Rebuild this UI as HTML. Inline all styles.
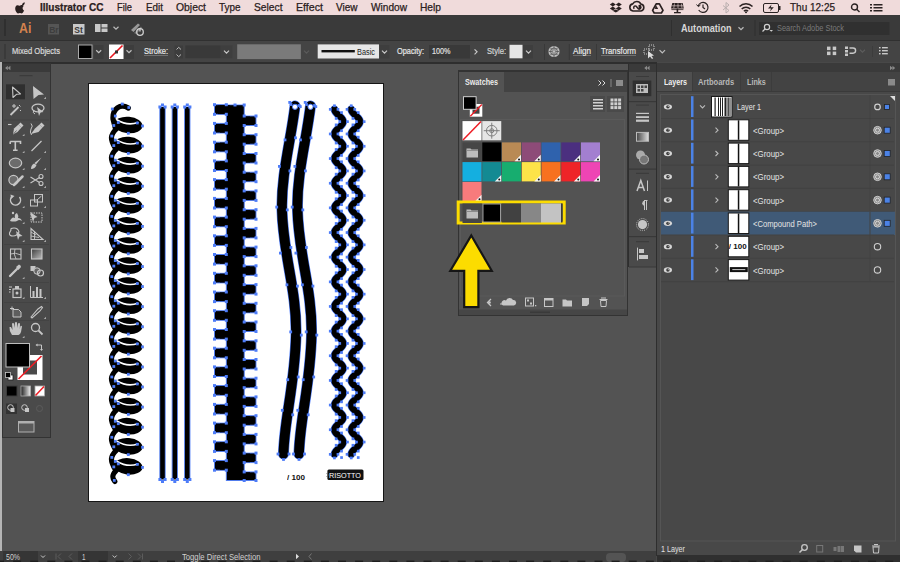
<!DOCTYPE html><html><head><meta charset="utf-8"><style>
*{margin:0;padding:0;box-sizing:border-box}
html,body{width:900px;height:562px;overflow:hidden;background:#535353;font-family:"Liberation Sans",sans-serif}
.a{position:absolute}
.t{position:absolute;white-space:nowrap;line-height:1;transform-origin:0 0}
svg{position:absolute;overflow:visible}
</style></head><body><div class="a" style="left:0px;top:0px;width:900px;height:15px;background:#f0dbdb;"></div><div class="t" style="left:39.5px;top:2.21px;font-size:10.5px;color:#2a2020;font-weight:bold;transform:scaleX(0.9547);-webkit-text-stroke:0.25px #2a2020">Illustrator CC</div><div class="t" style="left:117px;top:2.21px;font-size:10.5px;color:#2a2020;font-weight:normal;transform:scaleX(0.8864);-webkit-text-stroke:0.25px #2a2020">File</div><div class="t" style="left:146px;top:2.21px;font-size:10.5px;color:#2a2020;font-weight:normal;transform:scaleX(0.9396);-webkit-text-stroke:0.25px #2a2020">Edit</div><div class="t" style="left:176px;top:2.21px;font-size:10.5px;color:#2a2020;font-weight:normal;transform:scaleX(0.9882);-webkit-text-stroke:0.25px #2a2020">Object</div><div class="t" style="left:219px;top:2.21px;font-size:10.5px;color:#2a2020;font-weight:normal;transform:scaleX(0.9444);-webkit-text-stroke:0.25px #2a2020">Type</div><div class="t" style="left:253.5px;top:2.21px;font-size:10.5px;color:#2a2020;font-weight:normal;transform:scaleX(0.9764);-webkit-text-stroke:0.25px #2a2020">Select</div><div class="t" style="left:295.5px;top:2.21px;font-size:10.5px;color:#2a2020;font-weight:normal;transform:scaleX(1.0129);-webkit-text-stroke:0.25px #2a2020">Effect</div><div class="t" style="left:335.5px;top:2.21px;font-size:10.5px;color:#2a2020;font-weight:normal;transform:scaleX(0.9522);-webkit-text-stroke:0.25px #2a2020">View</div><div class="t" style="left:370.5px;top:2.21px;font-size:10.5px;color:#2a2020;font-weight:normal;transform:scaleX(0.9636);-webkit-text-stroke:0.25px #2a2020">Window</div><div class="t" style="left:419.5px;top:2.21px;font-size:10.5px;color:#2a2020;font-weight:normal;transform:scaleX(0.9718);-webkit-text-stroke:0.25px #2a2020">Help</div><div class="t" style="left:790px;top:2.21px;font-size:10.5px;color:#2a2020;font-weight:normal;transform:scaleX(0.9514);-webkit-text-stroke:0.25px #2a2020">Thu 12:25</div><svg style="left:14px;top:1px;" width="12" height="13" viewBox="0 0 12 13"><path d="M8.2 1.2c-.8.1-1.7.6-2.1 1.3-.4.6-.7 1.4-.6 2.1.9 0 1.7-.5 2.2-1.2.4-.6.7-1.4.5-2.2zM5.6 4.2c-1 0-1.9.6-2.5.6-.6 0-1.4-.6-2.3-.5C-.3 4.4-1.3 5.5-1.3 7.6c0 1.3.5 2.6 1.1 3.5.5.7 1 1.4 1.7 1.4.7 0 1-.4 1.8-.4s1.1.4 1.8.4c.8 0 1.2-.7 1.7-1.4.5-.8.8-1.5.8-1.6 0 0-1.5-.6-1.5-2.3 0-1.4 1.1-2.1 1.2-2.2-.7-1-1.7-1.1-2-1.1-.9-.1-1.7.5-2.1.5z" transform="translate(2.5 0)" fill="#2a2020"/></svg><svg style="left:0px;top:0px;" width="900" height="15" viewBox="0 0 900 15"><g transform="translate(609.8 2.6)" fill="#2a2020"><path d="M3 0 L6 2 L3 4 L0 2Z M9 0 L12 2 L9 4 L6 2Z M3 4 L6 6 L3 8 L0 6Z M9 4 L12 6 L9 8 L6 6Z M2.8 8.2 L6 6.8 L9.2 8.2 L6 10Z"/></g><g fill="none" stroke="#2a2020"><path d="M633 11 a3.6 3.6 0 0 1 -0.3 -7.1 a4.6 4.6 0 0 1 8.2 0.2 a3.5 3.5 0 0 1 0 6.9z" stroke-width="1.6"/><path d="M634.3 8.8 a1.6 1.6 0 1 1 2.6 -1.6 l1.5 1.6 a1.6 1.6 0 1 0 0.8 -3" stroke-width="1.5"/></g><path d="M638.5 5 a2.3 2.3 0 1 1 0.2 4.5Z" fill="#2a2020"/><g transform="translate(652.6 3)" fill="none" stroke="#2a2020" stroke-width="1.7" stroke-linejoin="round"><path d="M3.6 0.8 L6.8 0.8 L10.4 7.4 L8.8 10 L1.6 10 L0 7.4Z"/></g><path d="M655.6 4.5 L658.2 9 L655 9Z" fill="#2a2020"/><g transform="translate(671 3)" fill="#2a2020"><path d="M1.3 0 L11.7 0 L12.8 5.6 L0 5.6Z"/><rect x="5.6" y="5.6" width="1.6" height="4"/><rect x="3" y="9" width="6.8" height="1.3"/><path d="M0.4 6.6 H12.4" stroke="#2a2020" stroke-width="0.8"/></g><path d="M674.5 3.5 L673.8 8 M678 3.3 V8 M681.3 3.5 L682 8 M671.6 5.8 H683.2" stroke="#f0dbdb" stroke-width=".6"/><g transform="translate(703 7.5)" fill="none" stroke="#2a2222" stroke-width="1.2"><path d="M-4.8 -1.5 A5 5 0 1 1 -4.3 2.5"/><path d="M0 -3 V0 L2 1.5"/><path d="M-6.5 -3 L-4.6 -0.8 L-2.5 -2.6" stroke-width="1"/></g><g transform="translate(726 2.5)" fill="none" stroke="#b8aeae" stroke-width="1"><path d="M-3 3 L3 8 L0 10.5 V0 L3 2.5 L-3 7.5"/></g><g transform="translate(746 12.5)" fill="none" stroke="#2a2222" stroke-width="1.5"><path d="M-6.5 -6 A9 9 0 0 1 6.5 -6"/><path d="M-4.3 -3.5 A6 6 0 0 1 4.3 -3.5"/><path d="M-2.1 -1.2 A3 3 0 0 1 2.1 -1.2"/></g><circle cx="746" cy="12.3" r="1" fill="#2a2222"/><g transform="translate(763 3)"><rect x="0.5" y="0.5" width="15" height="9" rx="1.5" fill="none" stroke="#2a2222" stroke-width="1"/><rect x="16" y="3" width="1.5" height="4" fill="#2a2222"/><path d="M8.5 1.5 L5 5.5 L8 5.5 L7 8.5 L10.8 4.3 L7.8 4.3Z" fill="#2a2222"/></g><g transform="translate(851 3.5)" fill="none" stroke="#2a2222" stroke-width="1.4"><circle cx="3.5" cy="3.5" r="3"/><path d="M5.7 5.7 L8.5 8.5"/></g><g transform="translate(870 4)" fill="#2a2222"><rect x="0" y="0" width="2" height="1.5"/><rect x="0" y="3" width="2" height="1.5"/><rect x="0" y="6" width="2" height="1.5"/><rect x="3.5" y="0" width="9" height="1.5"/><rect x="3.5" y="3" width="9" height="1.5"/><rect x="3.5" y="6" width="9" height="1.5"/></g></svg><div class="a" style="left:0px;top:15px;width:900px;height:25px;background:#3a3a3a;"></div><div class="a" style="left:4px;top:19px;width:2px;height:17px;background:#2f2f2f;"></div><div class="t" style="left:18.8px;top:21.45px;font-size:14px;color:#d4824e;font-weight:bold;transform:scaleX(0.8786);">Ai</div><svg style="left:0px;top:0px;" width="900" height="40" viewBox="0 0 900 40"><rect x="48" y="24" width="11" height="10.5" fill="#555"/><text x="49.2" y="32.6" font-size="8.5" font-family="Liberation Sans" fill="#3d3d3d" font-weight="bold">Br</text><rect x="73" y="24" width="11.5" height="10.5" fill="#c9c9c9"/><text x="74.3" y="32.6" font-size="8.5" font-family="Liberation Sans" fill="#3a3a3a" font-weight="bold">St</text><g fill="#c8c8c8"><rect x="95" y="24" width="5.5" height="8"/><rect x="101.5" y="24" width="6" height="3.5"/><rect x="101.5" y="28.5" width="6" height="3.5"/></g><path d="M113.5 26.75 L116 29.25 L118.5 26.75" stroke="#bbb" stroke-width="1.2" fill="none"/><g fill="#9a9a9a"><path d="M131 30 L138 23.5 L140 25 L133.5 32Z"/><path d="M134 33 L141 26.5 L142 28 L136 34Z" fill="#777"/></g><circle cx="140" cy="32" r="3.3" fill="none" stroke="#cfcfcf" stroke-width="1.3"/><path d="M140 28 V31.5" stroke="#cfcfcf" stroke-width="1.3"/><rect x="671" y="20" width="1" height="16" fill="#2f2f2f"/><rect x="754.5" y="20" width="1" height="16" fill="#2f2f2f"/><path d="M738.5 27.25 L741 29.75 L743.5 27.25" stroke="#bbb" stroke-width="1.2" fill="none"/><rect x="759" y="22" width="130.5" height="13" fill="#303030"/><g fill="none" stroke="#cfcfcf" stroke-width="1.2"><circle cx="767" cy="27" r="2.6"/><path d="M765 29 L762.5 31.5"/></g><path d="M769.5 30 L773 30 L771.25 31.8Z" fill="#cfcfcf"/></svg><div class="t" style="left:681px;top:23.54px;font-size:10px;color:#d7d7d7;font-weight:bold;transform:scaleX(0.9091);">Automation</div><div class="t" style="left:777px;top:24.30px;font-size:8.5px;color:#7a7a7a;font-weight:normal;transform:scaleX(0.8698);">Search Adobe Stock</div><div class="a" style="left:0px;top:40px;width:900px;height:22px;background:#444444;"></div><div class="a" style="left:0px;top:40px;width:900px;height:1px;background:#303030;"></div><div class="a" style="left:4px;top:44px;width:2px;height:15px;background:#3a3a3a;"></div><div class="t" style="left:11.7px;top:47.07px;font-size:8.9px;color:#d2d2d2;font-weight:normal;transform:scaleX(0.8536);-webkit-text-stroke:0.2px #e0e0e0">Mixed Objects</div><svg style="left:0px;top:0px;" width="900" height="62" viewBox="0 0 900 62"><rect x="78" y="44.5" width="14.5" height="14.5" fill="#aaa"/><rect x="79" y="45.5" width="12.5" height="12.5" fill="#000"/><rect x="94" y="45" width="9.5" height="14" fill="#3d3d3d"/><path d="M96.2 50.25 L98.7 52.75 L101.2 50.25" stroke="#c0c0c0" stroke-width="1.2" fill="none"/><rect x="109" y="44.5" width="14.5" height="14.5" fill="#fff"/><path d="M110 58 L122.5 45.5" stroke="#e8141c" stroke-width="1.6"/><rect x="115" y="50.5" width="3" height="3" fill="#333"/><rect x="124" y="45" width="10" height="14" fill="#3d3d3d"/><path d="M126.5 50.25 L129 52.75 L131.5 50.25" stroke="#c0c0c0" stroke-width="1.2" fill="none"/><rect x="174.5" y="45.5" width="8.5" height="13" fill="#3d3d3d"/><path d="M176.5 49.5 L178.7 47.3 L181 49.5 M176.5 54.5 L178.7 56.7 L181 54.5" stroke="#bbb" stroke-width="1" fill="none"/><rect x="185.3" y="45.4" width="35.4" height="12.8" fill="#393939"/><rect x="221" y="45.4" width="11.5" height="12.8" fill="#3e3e3e"/><path d="M224.0 50.55 L226.5 53.05 L229.0 50.55" stroke="#c8c8c8" stroke-width="1.2" fill="none"/><rect x="237.2" y="44.3" width="63.7" height="14.8" fill="#7a7a7a"/><path d="M304.0 50.55 L306.5 53.05 L309.0 50.55" stroke="#5a5a5a" stroke-width="1.2" fill="none"/><rect x="317.7" y="44.4" width="61.3" height="14.1" fill="#e6e6e6"/><rect x="321.5" y="50" width="33.3" height="2.4" fill="#111"/><rect x="379.5" y="45" width="10" height="13.5" fill="#3e3e3e"/><path d="M382.0 50.55 L384.5 53.05 L387.0 50.55" stroke="#c8c8c8" stroke-width="1.2" fill="none"/><rect x="429" y="45" width="41" height="13.5" fill="#393939"/><path d="M474.55 49.3 L477.05 51.8 L474.55 54.3" stroke="#c8c8c8" stroke-width="1.2" fill="none"/><rect x="509.5" y="44.8" width="13" height="13.5" fill="#e6e6e6"/><rect x="523" y="45" width="10" height="13.5" fill="#3e3e3e"/><path d="M526.0 50.55 L528.5 53.05 L531.0 50.55" stroke="#c8c8c8" stroke-width="1.2" fill="none"/><rect x="544" y="44" width="1" height="16" fill="#393939"/><rect x="568.8" y="44" width="1" height="16" fill="#393939"/><rect x="596" y="44" width="1" height="16" fill="#393939"/><circle cx="554" cy="51.5" r="5.6" fill="#bdbdbd"/><g stroke="#555" stroke-width=".8" fill="none"><circle cx="554" cy="51.5" r="3.5"/><path d="M554 46 V57 M548.5 51.5 H559.5 M550 47.5 L558 55.5 M558 47.5 L550 55.5"/></g><circle cx="554" cy="51.5" r="1.2" fill="#bdbdbd"/><g stroke="#c8c8c8" stroke-width="1" fill="none"><rect x="644" y="49" width="5" height="5" stroke-dasharray="1 1"/><rect x="649" y="45" width="5" height="5" stroke-dasharray="1 1"/></g><path d="M648 51 L648 58.5 L650 56.5 L652 59 L653.2 58.3 L651.5 56 L654 55.5Z" fill="#ddd"/><path d="M659.55 50.125 L662.3 52.875 L665.05 50.125" stroke="#c0c0c0" stroke-width="1.2" fill="none"/><g fill="#c8c8c8"><rect x="827" y="46.6" width="3.5" height="3.5"/><rect x="832.7" y="46.6" width="3.5" height="3.5"/><rect x="827" y="51.6" width="3.5" height="3.5"/><rect x="832.7" y="51.6" width="3.5" height="3.5"/></g><g fill="#c8c8c8"><rect x="845" y="46.5" width="3" height="2.5"/><rect x="845" y="50" width="3" height="2.5"/><rect x="845" y="53.5" width="3" height="2.5"/></g><path d="M849.5 48 H853 A2.6 2.6 0 0 1 853 53.2 H849.5" stroke="#c8c8c8" stroke-width="1.4" fill="none"/><path d="M860.0 49.75 L862.5 52.25 L865.0 49.75" stroke="#5c5c5c" stroke-width="1.1" fill="none"/><rect x="872" y="46" width="1" height="11" fill="#3c3c3c"/><g fill="#c8c8c8"><rect x="879" y="47" width="1.6" height="1.4"/><rect x="879" y="50" width="1.6" height="1.4"/><rect x="879" y="53" width="1.6" height="1.4"/><rect x="882" y="47" width="5.8" height="1.4"/><rect x="882" y="50" width="5.8" height="1.4"/><rect x="882" y="53" width="5.8" height="1.4"/></g></svg><div class="t" style="left:144.3px;top:47.07px;font-size:8.9px;color:#ececec;font-weight:normal;transform:scaleX(0.8533);text-decoration:underline;text-decoration-color:#707070;-webkit-text-stroke:0.2px #e0e0e0">Stroke:</div><div class="t" style="left:357.3px;top:48.00px;font-size:8.5px;color:#222;font-weight:normal;transform:scaleX(0.8655);">Basic</div><div class="t" style="left:397px;top:47.07px;font-size:8.9px;color:#ececec;font-weight:normal;transform:scaleX(0.8292);-webkit-text-stroke:0.2px #e0e0e0">Opacity:</div><div class="t" style="left:431.5px;top:47.24px;font-size:8.7px;color:#e0e0e0;font-weight:normal;transform:scaleX(0.8320);-webkit-text-stroke:0.2px #e0e0e0">100%</div><div class="t" style="left:486.5px;top:47.07px;font-size:8.9px;color:#c4c4c4;font-weight:normal;transform:scaleX(0.8647);-webkit-text-stroke:0.2px #e0e0e0">Style:</div><div class="t" style="left:572.5px;top:47.07px;font-size:8.9px;color:#ececec;font-weight:normal;transform:scaleX(0.9114);text-decoration:underline;text-decoration-color:#707070;-webkit-text-stroke:0.2px #e0e0e0">Align</div><div class="t" style="left:601px;top:47.07px;font-size:8.9px;color:#ececec;font-weight:normal;transform:scaleX(0.8726);text-decoration:underline;text-decoration-color:#707070;-webkit-text-stroke:0.2px #e0e0e0">Transform</div><div class="a" style="left:0px;top:62px;width:900px;height:2px;background:#2e2e2e;"></div><div class="a" style="left:0px;top:62px;width:1.5px;height:500px;background:#b5b5b5;"></div><div class="a" style="left:1.5px;top:63px;width:49.5px;height:375px;background:#4a4a4a;border:1px solid #333"></div><div class="a" style="left:2.5px;top:64px;width:47.5px;height:8px;background:#3a3a3a;"></div><svg style="left:0px;top:0px;" width="60" height="450" viewBox="0 0 60 450"><path d="M7.8 65.8 L5.1 68 L7.8 70.2Z M10.4 65.8 L7.7 68 L10.4 70.2Z" fill="#8a8a8a"/><rect x="19.5" y="75.2" width="13" height="1" fill="#383838"/><rect x="6" y="84.3" width="19" height="15" fill="#2f2f2f"/><path d="M12.5 87 L20.5 94 L16.5 94.3 L13 97.5Z" fill="none" stroke="#c6c6c6" stroke-width="1.1" stroke-linejoin="round"/><path d="M33 86 L44 94.5 L38.5 95 L33.5 99Z" fill="#c6c6c6"/><path d="M46 99 L46 96.8 L43.8 99Z" fill="#aaa"/><path d="M10.5 115 L18.5 107" stroke="#c6c6c6" stroke-width="1.8"/><path d="M14 104 L14 108 M12 106 L16 106 M19 105 L20.5 106.5 M20 110 L21 111" stroke="#c6c6c6" stroke-width="1"/><ellipse cx="38" cy="108" rx="6" ry="3.8" fill="none" stroke="#c6c6c6" stroke-width="1.3"/><path d="M34 110 Q32 113 35 114" fill="none" stroke="#c6c6c6" stroke-width="1"/><path d="M37 107 L43.5 112 L40.5 112.5 L39 116Z" fill="#c6c6c6"/><rect x="4" y="119.5" width="45" height="1" fill="#434343"/><path d="M8 124.5 L11.5 124.5" stroke="#c6c6c6" stroke-width="1.1"/><path d="M13 134.5 L14 128.5 L18.5 124.5 L21.5 127.5 L17.5 132Z" fill="#c6c6c6"/><path d="M18.5 124.5 L20.5 122.5 L23.5 125.5 L21.5 127.5" fill="#c6c6c6"/><path d="M13.5 134 L16.5 130.5" stroke="#555" stroke-width=".8"/><path d="M24.5 136 L24.5 133.8 L22.3 136Z" fill="#aaa"/><path d="M31 134 L35 128.5 L39.5 124.5 L42.5 127.5 L38.5 132Z" fill="#c6c6c6"/><path d="M39.5 124.5 L41.5 122.5 L44.5 125.5 L42.5 127.5" fill="#c6c6c6"/><path d="M31 123.5 Q33.5 126 31 129 Q29.5 132 31.5 135" fill="none" stroke="#c6c6c6" stroke-width="1"/><path d="M10.2 141.5 H20.5 V144 M10.2 141.5 V144 M15.3 141.5 V150.3 M13 150.3 H17.6" fill="none" stroke="#c6c6c6" stroke-width="1.6"/><path d="M24.5 153 L24.5 150.8 L22.3 153Z" fill="#aaa"/><path d="M31.5 151 L41.5 141" stroke="#c6c6c6" stroke-width="1.3"/><path d="M46 153 L46 150.8 L43.8 153Z" fill="#aaa"/><ellipse cx="15.5" cy="163" rx="6.2" ry="4.8" fill="#6c6c6c" stroke="#c6c6c6" stroke-width="1.2"/><path d="M24.5 170 L24.5 167.8 L22.3 170Z" fill="#aaa"/><path d="M41.5 157.5 L36 164.5 L34.5 163 Z" fill="#c6c6c6"/><path d="M34 163.5 Q31 165 31 169 Q35 169 36.5 165Z" fill="#c6c6c6"/><path d="M46 170 L46 167.8 L43.8 170Z" fill="#aaa"/><circle cx="13.5" cy="180" r="4.6" fill="#6c6c6c" stroke="#c6c6c6" stroke-width="1.2"/><path d="M14 185 L22.5 176.5" stroke="#c6c6c6" stroke-width="2.5" stroke-linecap="round"/><path d="M24.5 188 L24.5 185.8 L22.3 188Z" fill="#aaa"/><circle cx="41" cy="176.5" r="2" fill="none" stroke="#c6c6c6" stroke-width="1.1"/><circle cx="41" cy="183.5" r="2" fill="none" stroke="#c6c6c6" stroke-width="1.1"/><path d="M30.5 177 L39.5 182.5 M30.5 183 L39.5 177.5" stroke="#c6c6c6" stroke-width="1.2"/><path d="M46 188 L46 185.8 L43.8 188Z" fill="#aaa"/><rect x="4" y="190" width="45" height="1" fill="#434343"/><path d="M12 196.5 A5 5 0 1 0 19.5 197" fill="none" stroke="#c6c6c6" stroke-width="1.5"/><path d="M10.5 194.5 L14.5 196 L11 199Z" fill="#c6c6c6"/><path d="M24.5 208 L24.5 205.8 L22.3 208Z" fill="#aaa"/><rect x="30.5" y="200" width="7" height="6" fill="none" stroke="#c6c6c6" stroke-width="1"/><rect x="34.5" y="194.5" width="8" height="7.5" fill="none" stroke="#c6c6c6" stroke-width="1"/><path d="M37 200 L41.5 196" stroke="#c6c6c6" stroke-width="1"/><path d="M46 208 L46 205.8 L43.8 208Z" fill="#aaa"/><path d="M10 221 Q12 216 15 218 Q14 214 17 213 Q19 216 18 218 Q21 218 22 221 Q19 219 17 221 Q14 222 10 221Z" fill="#c6c6c6"/><circle cx="13" cy="213" r="1.2" fill="#c6c6c6"/><path d="M24.5 224 L24.5 221.8 L22.3 224Z" fill="#aaa"/><rect x="31" y="213" width="11" height="9" fill="none" stroke="#c6c6c6" stroke-width="1" stroke-dasharray="1.5 1"/><path d="M30 212 L37.5 217 L34.5 218 L33 222Z" fill="#c6c6c6"/><path d="M11 230 Q10 228 14 228 Q18 228 19 232 Q17 236 13 236 Q9 236 9.5 233Z" fill="none" stroke="#c6c6c6" stroke-width="1.1"/><path d="M16 231 L22.5 236 L19.5 236.5 L18 240Z" fill="#c6c6c6"/><path d="M24.5 242 L24.5 239.8 L22.3 242Z" fill="#aaa"/><path d="M31 228.5 L31 239.5 L43 239.5 Z" fill="none" stroke="#c6c6c6" stroke-width="1.1"/><path d="M31 232 L36 235 M31 236 L39 237.5 M34.5 231 V239.5" stroke="#c6c6c6" stroke-width=".9"/><path d="M46 242 L46 239.8 L43.8 242Z" fill="#aaa"/><rect x="4" y="244" width="45" height="1" fill="#434343"/><rect x="10.5" y="249" width="10.5" height="10" fill="none" stroke="#c6c6c6" stroke-width="1.1"/><path d="M10.5 254 Q15 252 21 255 M15 249 Q13 254 16 259" fill="none" stroke="#c6c6c6" stroke-width=".9"/><defs><linearGradient id="tg" x1="0" y1="0" x2="1" y2="1"><stop offset="0" stop-color="#3c3c3c"/><stop offset="1" stop-color="#bdbdbd"/></linearGradient><linearGradient id="tg2" x1="0" y1="0" x2="1" y2="0"><stop offset="0" stop-color="#222"/><stop offset="1" stop-color="#eee"/></linearGradient></defs><rect x="31.5" y="249" width="10.5" height="10" fill="url(#tg)" stroke="#c6c6c6" stroke-width="1.1"/><path d="M10 276 L17 269" stroke="#c6c6c6" stroke-width="2.3" stroke-linecap="round"/><path d="M16 267 L19 264.5 Q21 265 21 267 L18.5 270Z" fill="#c6c6c6"/><path d="M24.5 279 L24.5 276.8 L22.3 279Z" fill="#aaa"/><rect x="30.5" y="266" width="5" height="5" fill="#c6c6c6"/><circle cx="37" cy="271" r="3.2" fill="#666" stroke="#c6c6c6" stroke-width="1"/><circle cx="40.5" cy="273" r="3" fill="none" stroke="#c6c6c6" stroke-width="1.2"/><rect x="4" y="282" width="45" height="1" fill="#434343"/><path d="M9 287 H12 M9 289.5 H11 M9 292 H10.5" stroke="#c6c6c6" stroke-width="1"/><rect x="13" y="289" width="8" height="8.5" fill="none" stroke="#c6c6c6" stroke-width="1.2"/><rect x="15" y="286" width="4" height="3" fill="#c6c6c6"/><circle cx="17" cy="293" r="1.5" fill="#c6c6c6"/><path d="M24.5 299 L24.5 296.8 L22.3 299Z" fill="#aaa"/><path d="M30.5 286 V297.5 H43" fill="none" stroke="#c6c6c6" stroke-width="1"/><rect x="32.5" y="291" width="2" height="6" fill="#c6c6c6"/><rect x="36" y="287" width="2" height="10" fill="#c6c6c6"/><rect x="39.5" y="289" width="2" height="8" fill="#c6c6c6"/><path d="M46 299 L46 296.8 L43.8 299Z" fill="#aaa"/><rect x="4" y="302" width="45" height="1" fill="#434343"/><path d="M10 308.5 H14 M12 306.5 V310" stroke="#c6c6c6" stroke-width="1"/><path d="M13 309.5 H18.5 L21 312 V317 H13Z" fill="#5e5e5e" stroke="#c6c6c6" stroke-width="1"/><path d="M31 317 L38 309 L41.5 306.5 L42.5 307.5 L40 311 L32 318Z" fill="none" stroke="#c6c6c6" stroke-width="1.1"/><path d="M46 319 L46 316.8 L43.8 319Z" fill="#aaa"/><rect x="4" y="320" width="45" height="1" fill="#434343"/><path d="M12 335 Q9 331 9.5 327 L11 327 L12.5 330 L12 323.5 Q13 322.5 14 323.5 L14.5 328 L15 322.5 Q16 321.5 17 322.5 L17 328 L18 323.5 Q19 322.5 20 323.5 L19.8 329 L20.5 326 Q21.5 325.5 22 326.5 L21 332 Q20 335 18.5 335Z" fill="#c6c6c6"/><path d="M24.5 338 L24.5 335.8 L22.3 338Z" fill="#aaa"/><circle cx="35.5" cy="327.5" r="4" fill="none" stroke="#c6c6c6" stroke-width="1.3"/><path d="M38.5 330.5 L42.5 334.5" stroke="#c6c6c6" stroke-width="1.8"/><rect x="17.5" y="355" width="25" height="25" fill="#fff"/><rect x="23" y="360.5" width="14" height="14" fill="#4a4a4a"/><path d="M18.5 379 L41.5 356" stroke="#ee1c24" stroke-width="1.6"/><rect x="5.5" y="343" width="24.5" height="24.5" fill="#bdbdbd"/><rect x="6.5" y="344" width="22.5" height="22.5" fill="#000"/><path d="M37 345 H41.5 V349.5" fill="none" stroke="#c6c6c6" stroke-width="1"/><path d="M35.5 345 L37.5 343.5 V346.5Z M41.5 351 L40 349 H43Z" fill="#c6c6c6"/><rect x="8" y="375" width="5" height="5" fill="#fff" stroke="#222" stroke-width=".8"/><rect x="5.5" y="372.5" width="5" height="5" fill="#000" stroke="#c6c6c6" stroke-width=".8"/><rect x="6.5" y="386" width="10.5" height="10" fill="#000" stroke="#3a3a3a" stroke-width="1"/><rect x="21" y="386" width="9.5" height="10" fill="url(#tg2)" stroke="#aaa" stroke-width=".8"/><rect x="35" y="386" width="9.5" height="10" fill="#fff" stroke="#aaa" stroke-width=".8"/><path d="M35.5 395.5 L44 386.5" stroke="#ee1c24" stroke-width="1.5"/><rect x="6" y="403.5" width="11" height="10.5" fill="#333"/><circle cx="10.5" cy="407.5" r="2.8" fill="none" stroke="#c6c6c6" stroke-width="1"/><rect x="10.5" y="408" width="4" height="4" fill="#c6c6c6"/><circle cx="24.5" cy="407.5" r="2.8" fill="none" stroke="#c6c6c6" stroke-width="1"/><rect x="25" y="408" width="4" height="4" fill="#c6c6c6"/><circle cx="39.5" cy="408.5" r="3" fill="none" stroke="#5c5c5c" stroke-width="1"/><rect x="18.5" y="421.5" width="15.5" height="10.5" fill="#5a5a5a" stroke="#b0b0b0" stroke-width="1"/><rect x="18.5" y="421.5" width="15.5" height="2" fill="#b0b0b0"/></svg><div class="a" style="left:88px;top:82.5px;width:296px;height:419px;background:#fff;border:1.2px solid #151515"></div><svg width="900" height="562" style="position:absolute;left:0;top:0"><ellipse cx="128.3" cy="125.0" rx="14.2" ry="8.3" fill="#000" transform="rotate(5 128.3 125.0)"/><path d="M116.8 119.8 Q127.3 126.2 137.8 122.6" stroke="#fff" stroke-width="1.6" fill="none" stroke-linecap="round"/><ellipse cx="128.3" cy="145.1" rx="14.2" ry="8.3" fill="#000" transform="rotate(5 128.3 145.1)"/><path d="M116.8 139.9 Q127.3 146.3 137.8 142.7" stroke="#fff" stroke-width="1.6" fill="none" stroke-linecap="round"/><ellipse cx="128.3" cy="165.2" rx="14.2" ry="8.3" fill="#000" transform="rotate(5 128.3 165.2)"/><path d="M116.8 160.0 Q127.3 166.4 137.8 162.8" stroke="#fff" stroke-width="1.6" fill="none" stroke-linecap="round"/><ellipse cx="128.3" cy="185.2" rx="14.2" ry="8.3" fill="#000" transform="rotate(5 128.3 185.2)"/><path d="M116.8 180.0 Q127.3 186.4 137.8 182.8" stroke="#fff" stroke-width="1.6" fill="none" stroke-linecap="round"/><ellipse cx="128.3" cy="205.3" rx="14.2" ry="8.3" fill="#000" transform="rotate(5 128.3 205.3)"/><path d="M116.8 200.1 Q127.3 206.5 137.8 202.9" stroke="#fff" stroke-width="1.6" fill="none" stroke-linecap="round"/><ellipse cx="128.3" cy="225.4" rx="14.2" ry="8.3" fill="#000" transform="rotate(5 128.3 225.4)"/><path d="M116.8 220.2 Q127.3 226.6 137.8 223.0" stroke="#fff" stroke-width="1.6" fill="none" stroke-linecap="round"/><ellipse cx="128.3" cy="245.5" rx="14.2" ry="8.3" fill="#000" transform="rotate(5 128.3 245.5)"/><path d="M116.8 240.3 Q127.3 246.7 137.8 243.1" stroke="#fff" stroke-width="1.6" fill="none" stroke-linecap="round"/><ellipse cx="128.3" cy="265.6" rx="14.2" ry="8.3" fill="#000" transform="rotate(5 128.3 265.6)"/><path d="M116.8 260.4 Q127.3 266.8 137.8 263.2" stroke="#fff" stroke-width="1.6" fill="none" stroke-linecap="round"/><ellipse cx="128.3" cy="285.6" rx="14.2" ry="8.3" fill="#000" transform="rotate(5 128.3 285.6)"/><path d="M116.8 280.4 Q127.3 286.8 137.8 283.2" stroke="#fff" stroke-width="1.6" fill="none" stroke-linecap="round"/><ellipse cx="128.3" cy="305.7" rx="14.2" ry="8.3" fill="#000" transform="rotate(5 128.3 305.7)"/><path d="M116.8 300.5 Q127.3 306.9 137.8 303.3" stroke="#fff" stroke-width="1.6" fill="none" stroke-linecap="round"/><ellipse cx="128.3" cy="325.8" rx="14.2" ry="8.3" fill="#000" transform="rotate(5 128.3 325.8)"/><path d="M116.8 320.6 Q127.3 327.0 137.8 323.4" stroke="#fff" stroke-width="1.6" fill="none" stroke-linecap="round"/><ellipse cx="128.3" cy="345.9" rx="14.2" ry="8.3" fill="#000" transform="rotate(5 128.3 345.9)"/><path d="M116.8 340.7 Q127.3 347.1 137.8 343.5" stroke="#fff" stroke-width="1.6" fill="none" stroke-linecap="round"/><ellipse cx="128.3" cy="366.0" rx="14.2" ry="8.3" fill="#000" transform="rotate(5 128.3 366.0)"/><path d="M116.8 360.8 Q127.3 367.2 137.8 363.6" stroke="#fff" stroke-width="1.6" fill="none" stroke-linecap="round"/><ellipse cx="128.3" cy="386.0" rx="14.2" ry="8.3" fill="#000" transform="rotate(5 128.3 386.0)"/><path d="M116.8 380.8 Q127.3 387.2 137.8 383.6" stroke="#fff" stroke-width="1.6" fill="none" stroke-linecap="round"/><ellipse cx="128.3" cy="406.1" rx="14.2" ry="8.3" fill="#000" transform="rotate(5 128.3 406.1)"/><path d="M116.8 400.9 Q127.3 407.3 137.8 403.7" stroke="#fff" stroke-width="1.6" fill="none" stroke-linecap="round"/><ellipse cx="128.3" cy="426.2" rx="14.2" ry="8.3" fill="#000" transform="rotate(5 128.3 426.2)"/><path d="M116.8 421.0 Q127.3 427.4 137.8 423.8" stroke="#fff" stroke-width="1.6" fill="none" stroke-linecap="round"/><ellipse cx="128.3" cy="446.3" rx="14.2" ry="8.3" fill="#000" transform="rotate(5 128.3 446.3)"/><path d="M116.8 441.1 Q127.3 447.5 137.8 443.9" stroke="#fff" stroke-width="1.6" fill="none" stroke-linecap="round"/><ellipse cx="128.3" cy="466.4" rx="14.2" ry="8.3" fill="#000" transform="rotate(5 128.3 466.4)"/><path d="M116.8 461.2 Q127.3 467.6 137.8 464.0" stroke="#fff" stroke-width="1.6" fill="none" stroke-linecap="round"/><path d="M128.3 108.0 C120.30000000000001 103.0 112.30000000000001 109.0 113.00000000000001 119.0 L115.30000000000001 128.0 M116.3 129.0 C110.3 135.0 109.8 139.1 115.30000000000001 148.1 M116.3 149.1 C110.3 155.1 109.8 159.2 115.30000000000001 168.2 M116.3 169.2 C110.3 175.2 109.8 179.2 115.30000000000001 188.2 M116.3 189.2 C110.3 195.2 109.8 199.3 115.30000000000001 208.3 M116.3 209.3 C110.3 215.3 109.8 219.4 115.30000000000001 228.4 M116.3 229.4 C110.3 235.4 109.8 239.5 115.30000000000001 248.5 M116.3 249.5 C110.3 255.5 109.8 259.6 115.30000000000001 268.6 M116.3 269.6 C110.3 275.6 109.8 279.6 115.30000000000001 288.6 M116.3 289.6 C110.3 295.6 109.8 299.7 115.30000000000001 308.7 M116.3 309.7 C110.3 315.7 109.8 319.8 115.30000000000001 328.8 M116.3 329.8 C110.3 335.8 109.8 339.9 115.30000000000001 348.9 M116.3 349.9 C110.3 355.9 109.8 360.0 115.30000000000001 369.0 M116.3 370.0 C110.3 376.0 109.8 380.0 115.30000000000001 389.0 M116.3 390.0 C110.3 396.0 109.8 400.1 115.30000000000001 409.1 M116.3 410.1 C110.3 416.1 109.8 420.2 115.30000000000001 429.2 M116.3 430.2 C110.3 436.2 109.8 440.3 115.30000000000001 449.3 M116.3 450.3 C110.3 456.3 109.8 460.4 115.30000000000001 469.4 M116.3 470.4 C111.3 475.4 112.3 478.4 114.80000000000001 481.4" stroke="#000" stroke-width="5.2" fill="none" stroke-linecap="round"/><g fill="#4d7cf8"><rect x="141.1" y="124.6" width="2.8" height="2.8"/><rect x="126.9" y="131.9" width="2.8" height="2.8"/><rect x="135.9" y="121.6" width="2.8" height="2.8"/><rect x="116.9" y="121.1" width="2.8" height="2.8"/><rect x="112.4" y="124.1" width="2.8" height="2.8"/><rect x="120.9" y="102.6" width="2.8" height="2.8"/><rect x="127.4" y="106.1" width="2.8" height="2.8"/><rect x="110.9" y="107.6" width="2.8" height="2.8"/><rect x="113.9" y="114.6" width="2.8" height="2.8"/><rect x="141.1" y="144.7" width="2.8" height="2.8"/><rect x="126.9" y="152.0" width="2.8" height="2.8"/><rect x="135.9" y="141.7" width="2.8" height="2.8"/><rect x="116.9" y="141.2" width="2.8" height="2.8"/><rect x="112.4" y="144.2" width="2.8" height="2.8"/><rect x="110.4" y="134.7" width="2.8" height="2.8"/><rect x="113.9" y="138.7" width="2.8" height="2.8"/><rect x="141.1" y="164.8" width="2.8" height="2.8"/><rect x="126.9" y="172.1" width="2.8" height="2.8"/><rect x="135.9" y="161.8" width="2.8" height="2.8"/><rect x="116.9" y="161.3" width="2.8" height="2.8"/><rect x="112.4" y="164.3" width="2.8" height="2.8"/><rect x="110.4" y="154.8" width="2.8" height="2.8"/><rect x="113.9" y="158.8" width="2.8" height="2.8"/><rect x="141.1" y="184.8" width="2.8" height="2.8"/><rect x="126.9" y="192.1" width="2.8" height="2.8"/><rect x="135.9" y="181.8" width="2.8" height="2.8"/><rect x="116.9" y="181.3" width="2.8" height="2.8"/><rect x="112.4" y="184.3" width="2.8" height="2.8"/><rect x="110.4" y="174.8" width="2.8" height="2.8"/><rect x="113.9" y="178.8" width="2.8" height="2.8"/><rect x="141.1" y="204.9" width="2.8" height="2.8"/><rect x="126.9" y="212.2" width="2.8" height="2.8"/><rect x="135.9" y="201.9" width="2.8" height="2.8"/><rect x="116.9" y="201.4" width="2.8" height="2.8"/><rect x="112.4" y="204.4" width="2.8" height="2.8"/><rect x="110.4" y="194.9" width="2.8" height="2.8"/><rect x="113.9" y="198.9" width="2.8" height="2.8"/><rect x="141.1" y="225.0" width="2.8" height="2.8"/><rect x="126.9" y="232.3" width="2.8" height="2.8"/><rect x="135.9" y="222.0" width="2.8" height="2.8"/><rect x="116.9" y="221.5" width="2.8" height="2.8"/><rect x="112.4" y="224.5" width="2.8" height="2.8"/><rect x="110.4" y="215.0" width="2.8" height="2.8"/><rect x="113.9" y="219.0" width="2.8" height="2.8"/><rect x="141.1" y="245.1" width="2.8" height="2.8"/><rect x="126.9" y="252.4" width="2.8" height="2.8"/><rect x="135.9" y="242.1" width="2.8" height="2.8"/><rect x="116.9" y="241.6" width="2.8" height="2.8"/><rect x="112.4" y="244.6" width="2.8" height="2.8"/><rect x="110.4" y="235.1" width="2.8" height="2.8"/><rect x="113.9" y="239.1" width="2.8" height="2.8"/><rect x="141.1" y="265.2" width="2.8" height="2.8"/><rect x="126.9" y="272.5" width="2.8" height="2.8"/><rect x="135.9" y="262.2" width="2.8" height="2.8"/><rect x="116.9" y="261.7" width="2.8" height="2.8"/><rect x="112.4" y="264.7" width="2.8" height="2.8"/><rect x="110.4" y="255.2" width="2.8" height="2.8"/><rect x="113.9" y="259.2" width="2.8" height="2.8"/><rect x="141.1" y="285.2" width="2.8" height="2.8"/><rect x="126.9" y="292.5" width="2.8" height="2.8"/><rect x="135.9" y="282.2" width="2.8" height="2.8"/><rect x="116.9" y="281.7" width="2.8" height="2.8"/><rect x="112.4" y="284.7" width="2.8" height="2.8"/><rect x="110.4" y="275.2" width="2.8" height="2.8"/><rect x="113.9" y="279.2" width="2.8" height="2.8"/><rect x="141.1" y="305.3" width="2.8" height="2.8"/><rect x="126.9" y="312.6" width="2.8" height="2.8"/><rect x="135.9" y="302.3" width="2.8" height="2.8"/><rect x="116.9" y="301.8" width="2.8" height="2.8"/><rect x="112.4" y="304.8" width="2.8" height="2.8"/><rect x="110.4" y="295.3" width="2.8" height="2.8"/><rect x="113.9" y="299.3" width="2.8" height="2.8"/><rect x="141.1" y="325.4" width="2.8" height="2.8"/><rect x="126.9" y="332.7" width="2.8" height="2.8"/><rect x="135.9" y="322.4" width="2.8" height="2.8"/><rect x="116.9" y="321.9" width="2.8" height="2.8"/><rect x="112.4" y="324.9" width="2.8" height="2.8"/><rect x="110.4" y="315.4" width="2.8" height="2.8"/><rect x="113.9" y="319.4" width="2.8" height="2.8"/><rect x="141.1" y="345.5" width="2.8" height="2.8"/><rect x="126.9" y="352.8" width="2.8" height="2.8"/><rect x="135.9" y="342.5" width="2.8" height="2.8"/><rect x="116.9" y="342.0" width="2.8" height="2.8"/><rect x="112.4" y="345.0" width="2.8" height="2.8"/><rect x="110.4" y="335.5" width="2.8" height="2.8"/><rect x="113.9" y="339.5" width="2.8" height="2.8"/><rect x="141.1" y="365.6" width="2.8" height="2.8"/><rect x="126.9" y="372.9" width="2.8" height="2.8"/><rect x="135.9" y="362.6" width="2.8" height="2.8"/><rect x="116.9" y="362.1" width="2.8" height="2.8"/><rect x="112.4" y="365.1" width="2.8" height="2.8"/><rect x="110.4" y="355.6" width="2.8" height="2.8"/><rect x="113.9" y="359.6" width="2.8" height="2.8"/><rect x="141.1" y="385.6" width="2.8" height="2.8"/><rect x="126.9" y="392.9" width="2.8" height="2.8"/><rect x="135.9" y="382.6" width="2.8" height="2.8"/><rect x="116.9" y="382.1" width="2.8" height="2.8"/><rect x="112.4" y="385.1" width="2.8" height="2.8"/><rect x="110.4" y="375.6" width="2.8" height="2.8"/><rect x="113.9" y="379.6" width="2.8" height="2.8"/><rect x="141.1" y="405.7" width="2.8" height="2.8"/><rect x="126.9" y="413.0" width="2.8" height="2.8"/><rect x="135.9" y="402.7" width="2.8" height="2.8"/><rect x="116.9" y="402.2" width="2.8" height="2.8"/><rect x="112.4" y="405.2" width="2.8" height="2.8"/><rect x="110.4" y="395.7" width="2.8" height="2.8"/><rect x="113.9" y="399.7" width="2.8" height="2.8"/><rect x="141.1" y="425.8" width="2.8" height="2.8"/><rect x="126.9" y="433.1" width="2.8" height="2.8"/><rect x="135.9" y="422.8" width="2.8" height="2.8"/><rect x="116.9" y="422.3" width="2.8" height="2.8"/><rect x="112.4" y="425.3" width="2.8" height="2.8"/><rect x="110.4" y="415.8" width="2.8" height="2.8"/><rect x="113.9" y="419.8" width="2.8" height="2.8"/><rect x="141.1" y="445.9" width="2.8" height="2.8"/><rect x="126.9" y="453.2" width="2.8" height="2.8"/><rect x="135.9" y="442.9" width="2.8" height="2.8"/><rect x="116.9" y="442.4" width="2.8" height="2.8"/><rect x="112.4" y="445.4" width="2.8" height="2.8"/><rect x="110.4" y="435.9" width="2.8" height="2.8"/><rect x="113.9" y="439.9" width="2.8" height="2.8"/><rect x="141.1" y="466.0" width="2.8" height="2.8"/><rect x="126.9" y="473.3" width="2.8" height="2.8"/><rect x="135.9" y="463.0" width="2.8" height="2.8"/><rect x="116.9" y="462.5" width="2.8" height="2.8"/><rect x="112.4" y="465.5" width="2.8" height="2.8"/><rect x="110.4" y="456.0" width="2.8" height="2.8"/><rect x="113.9" y="460.0" width="2.8" height="2.8"/><rect x="112.9" y="479.0" width="2.8" height="2.8"/></g><rect x="159.9" y="107" width="5.2" height="372.5" fill="#000"/><rect x="159.4" y="107" width="0.8" height="372.5" fill="#4d7cf8"/><rect x="164.8" y="107" width="0.8" height="372.5" fill="#4d7cf8"/><rect x="172.2" y="107" width="5.2" height="372.5" fill="#000"/><rect x="171.7" y="107" width="0.8" height="372.5" fill="#4d7cf8"/><rect x="177.1" y="107" width="0.8" height="372.5" fill="#4d7cf8"/><rect x="184.7" y="107" width="5.2" height="372.5" fill="#000"/><rect x="184.2" y="107" width="0.8" height="372.5" fill="#4d7cf8"/><rect x="189.6" y="107" width="0.8" height="372.5" fill="#4d7cf8"/><g fill="#4d7cf8"><rect x="158.4" y="105.5" width="3" height="3"/><rect x="163.6" y="105.5" width="3" height="3"/><rect x="161.0" y="103.5" width="3" height="3"/><rect x="158.4" y="478.0" width="3" height="3"/><rect x="163.6" y="478.0" width="3" height="3"/><rect x="161.0" y="480.0" width="3" height="3"/><rect x="170.7" y="105.5" width="3" height="3"/><rect x="175.9" y="105.5" width="3" height="3"/><rect x="173.3" y="103.5" width="3" height="3"/><rect x="170.7" y="478.0" width="3" height="3"/><rect x="175.9" y="478.0" width="3" height="3"/><rect x="173.3" y="480.0" width="3" height="3"/><rect x="183.2" y="105.5" width="3" height="3"/><rect x="188.4" y="105.5" width="3" height="3"/><rect x="185.8" y="103.5" width="3" height="3"/><rect x="183.2" y="478.0" width="3" height="3"/><rect x="188.4" y="478.0" width="3" height="3"/><rect x="185.8" y="480.0" width="3" height="3"/></g><g fill="#000" stroke="#4d7cf8" stroke-width="0.9"><rect x="214.5" y="104.7" width="13" height="9.6" rx="1.8"/><rect x="214.5" y="123.4" width="13" height="9.6" rx="1.8"/><rect x="214.5" y="142.2" width="13" height="9.6" rx="1.8"/><rect x="214.5" y="160.9" width="13" height="9.6" rx="1.8"/><rect x="214.5" y="179.6" width="13" height="9.6" rx="1.8"/><rect x="214.5" y="198.4" width="13" height="9.6" rx="1.8"/><rect x="214.5" y="217.1" width="13" height="9.6" rx="1.8"/><rect x="214.5" y="235.8" width="13" height="9.6" rx="1.8"/><rect x="214.5" y="254.5" width="13" height="9.6" rx="1.8"/><rect x="214.5" y="273.3" width="13" height="9.6" rx="1.8"/><rect x="214.5" y="292.0" width="13" height="9.6" rx="1.8"/><rect x="214.5" y="310.7" width="13" height="9.6" rx="1.8"/><rect x="214.5" y="329.5" width="13" height="9.6" rx="1.8"/><rect x="214.5" y="348.2" width="13" height="9.6" rx="1.8"/><rect x="214.5" y="366.9" width="13" height="9.6" rx="1.8"/><rect x="214.5" y="385.6" width="13" height="9.6" rx="1.8"/><rect x="214.5" y="404.4" width="13" height="9.6" rx="1.8"/><rect x="214.5" y="423.1" width="13" height="9.6" rx="1.8"/><rect x="214.5" y="441.8" width="13" height="9.6" rx="1.8"/><rect x="214.5" y="460.6" width="13" height="9.6" rx="1.8"/><rect x="243" y="116.0" width="13" height="9.5" rx="1.8"/><rect x="243" y="134.7" width="13" height="9.5" rx="1.8"/><rect x="243" y="153.5" width="13" height="9.5" rx="1.8"/><rect x="243" y="172.2" width="13" height="9.5" rx="1.8"/><rect x="243" y="190.9" width="13" height="9.5" rx="1.8"/><rect x="243" y="209.7" width="13" height="9.5" rx="1.8"/><rect x="243" y="228.4" width="13" height="9.5" rx="1.8"/><rect x="243" y="247.1" width="13" height="9.5" rx="1.8"/><rect x="243" y="265.8" width="13" height="9.5" rx="1.8"/><rect x="243" y="284.6" width="13" height="9.5" rx="1.8"/><rect x="243" y="303.3" width="13" height="9.5" rx="1.8"/><rect x="243" y="322.0" width="13" height="9.5" rx="1.8"/><rect x="243" y="340.8" width="13" height="9.5" rx="1.8"/><rect x="243" y="359.5" width="13" height="9.5" rx="1.8"/><rect x="243" y="378.2" width="13" height="9.5" rx="1.8"/><rect x="243" y="396.9" width="13" height="9.5" rx="1.8"/><rect x="243" y="415.7" width="13" height="9.5" rx="1.8"/><rect x="243" y="434.4" width="13" height="9.5" rx="1.8"/><rect x="243" y="453.1" width="13" height="9.5" rx="1.8"/><rect x="243" y="471.9" width="13" height="8.6" rx="1.8"/><rect x="226.3" y="105" width="17.9" height="375.5"/></g><g fill="#000"><rect x="218" y="105.5" width="25" height="8.6"/><rect x="220" y="105.2" width="10" height="8.7"/><rect x="220" y="123.9" width="10" height="8.7"/><rect x="220" y="142.6" width="10" height="8.7"/><rect x="220" y="161.3" width="10" height="8.7"/><rect x="220" y="180.1" width="10" height="8.7"/><rect x="220" y="198.8" width="10" height="8.7"/><rect x="220" y="217.5" width="10" height="8.7"/><rect x="220" y="236.3" width="10" height="8.7"/><rect x="220" y="255.0" width="10" height="8.7"/><rect x="220" y="273.7" width="10" height="8.7"/><rect x="220" y="292.4" width="10" height="8.7"/><rect x="220" y="311.2" width="10" height="8.7"/><rect x="220" y="329.9" width="10" height="8.7"/><rect x="220" y="348.6" width="10" height="8.7"/><rect x="220" y="367.4" width="10" height="8.7"/><rect x="220" y="386.1" width="10" height="8.7"/><rect x="220" y="404.8" width="10" height="8.7"/><rect x="220" y="423.6" width="10" height="8.7"/><rect x="220" y="442.3" width="10" height="8.7"/><rect x="220" y="461.0" width="10" height="8.7"/><rect x="240" y="116.5" width="10" height="8.6"/><rect x="240" y="135.2" width="10" height="8.6"/><rect x="240" y="153.9" width="10" height="8.6"/><rect x="240" y="172.6" width="10" height="8.6"/><rect x="240" y="191.4" width="10" height="8.6"/><rect x="240" y="210.1" width="10" height="8.6"/><rect x="240" y="228.8" width="10" height="8.6"/><rect x="240" y="247.6" width="10" height="8.6"/><rect x="240" y="266.3" width="10" height="8.6"/><rect x="240" y="285.0" width="10" height="8.6"/><rect x="240" y="303.8" width="10" height="8.6"/><rect x="240" y="322.5" width="10" height="8.6"/><rect x="240" y="341.2" width="10" height="8.6"/><rect x="240" y="359.9" width="10" height="8.6"/><rect x="240" y="378.7" width="10" height="8.6"/><rect x="240" y="397.4" width="10" height="8.6"/><rect x="240" y="416.1" width="10" height="8.6"/><rect x="240" y="434.9" width="10" height="8.6"/><rect x="240" y="453.6" width="10" height="8.6"/><rect x="240" y="472.3" width="10" height="7.7"/></g><g fill="#4d7cf8"><rect x="213.0" y="103.2" width="3" height="3"/><rect x="213.0" y="112.8" width="3" height="3"/><rect x="224.8" y="103.2" width="3" height="3"/><rect x="224.8" y="112.8" width="3" height="3"/><rect x="213.0" y="121.9" width="3" height="3"/><rect x="213.0" y="131.5" width="3" height="3"/><rect x="224.8" y="121.9" width="3" height="3"/><rect x="224.8" y="131.5" width="3" height="3"/><rect x="213.0" y="140.7" width="3" height="3"/><rect x="213.0" y="150.3" width="3" height="3"/><rect x="224.8" y="140.7" width="3" height="3"/><rect x="224.8" y="150.3" width="3" height="3"/><rect x="213.0" y="159.4" width="3" height="3"/><rect x="213.0" y="169.0" width="3" height="3"/><rect x="224.8" y="159.4" width="3" height="3"/><rect x="224.8" y="169.0" width="3" height="3"/><rect x="213.0" y="178.1" width="3" height="3"/><rect x="213.0" y="187.7" width="3" height="3"/><rect x="224.8" y="178.1" width="3" height="3"/><rect x="224.8" y="187.7" width="3" height="3"/><rect x="213.0" y="196.9" width="3" height="3"/><rect x="213.0" y="206.5" width="3" height="3"/><rect x="224.8" y="196.9" width="3" height="3"/><rect x="224.8" y="206.5" width="3" height="3"/><rect x="213.0" y="215.6" width="3" height="3"/><rect x="213.0" y="225.2" width="3" height="3"/><rect x="224.8" y="215.6" width="3" height="3"/><rect x="224.8" y="225.2" width="3" height="3"/><rect x="213.0" y="234.3" width="3" height="3"/><rect x="213.0" y="243.9" width="3" height="3"/><rect x="224.8" y="234.3" width="3" height="3"/><rect x="224.8" y="243.9" width="3" height="3"/><rect x="213.0" y="253.0" width="3" height="3"/><rect x="213.0" y="262.6" width="3" height="3"/><rect x="224.8" y="253.0" width="3" height="3"/><rect x="224.8" y="262.6" width="3" height="3"/><rect x="213.0" y="271.8" width="3" height="3"/><rect x="213.0" y="281.4" width="3" height="3"/><rect x="224.8" y="271.8" width="3" height="3"/><rect x="224.8" y="281.4" width="3" height="3"/><rect x="213.0" y="290.5" width="3" height="3"/><rect x="213.0" y="300.1" width="3" height="3"/><rect x="224.8" y="290.5" width="3" height="3"/><rect x="224.8" y="300.1" width="3" height="3"/><rect x="213.0" y="309.2" width="3" height="3"/><rect x="213.0" y="318.8" width="3" height="3"/><rect x="224.8" y="309.2" width="3" height="3"/><rect x="224.8" y="318.8" width="3" height="3"/><rect x="213.0" y="328.0" width="3" height="3"/><rect x="213.0" y="337.6" width="3" height="3"/><rect x="224.8" y="328.0" width="3" height="3"/><rect x="224.8" y="337.6" width="3" height="3"/><rect x="213.0" y="346.7" width="3" height="3"/><rect x="213.0" y="356.3" width="3" height="3"/><rect x="224.8" y="346.7" width="3" height="3"/><rect x="224.8" y="356.3" width="3" height="3"/><rect x="213.0" y="365.4" width="3" height="3"/><rect x="213.0" y="375.0" width="3" height="3"/><rect x="224.8" y="365.4" width="3" height="3"/><rect x="224.8" y="375.0" width="3" height="3"/><rect x="213.0" y="384.1" width="3" height="3"/><rect x="213.0" y="393.8" width="3" height="3"/><rect x="224.8" y="384.1" width="3" height="3"/><rect x="224.8" y="393.8" width="3" height="3"/><rect x="213.0" y="402.9" width="3" height="3"/><rect x="213.0" y="412.5" width="3" height="3"/><rect x="224.8" y="402.9" width="3" height="3"/><rect x="224.8" y="412.5" width="3" height="3"/><rect x="213.0" y="421.6" width="3" height="3"/><rect x="213.0" y="431.2" width="3" height="3"/><rect x="224.8" y="421.6" width="3" height="3"/><rect x="224.8" y="431.2" width="3" height="3"/><rect x="213.0" y="440.3" width="3" height="3"/><rect x="213.0" y="449.9" width="3" height="3"/><rect x="224.8" y="440.3" width="3" height="3"/><rect x="224.8" y="449.9" width="3" height="3"/><rect x="213.0" y="459.1" width="3" height="3"/><rect x="213.0" y="468.7" width="3" height="3"/><rect x="224.8" y="459.1" width="3" height="3"/><rect x="224.8" y="468.7" width="3" height="3"/><rect x="254.5" y="114.5" width="3" height="3"/><rect x="254.5" y="124.0" width="3" height="3"/><rect x="242.7" y="114.5" width="3" height="3"/><rect x="242.7" y="124.0" width="3" height="3"/><rect x="254.5" y="133.2" width="3" height="3"/><rect x="254.5" y="142.7" width="3" height="3"/><rect x="242.7" y="133.2" width="3" height="3"/><rect x="242.7" y="142.7" width="3" height="3"/><rect x="254.5" y="152.0" width="3" height="3"/><rect x="254.5" y="161.5" width="3" height="3"/><rect x="242.7" y="152.0" width="3" height="3"/><rect x="242.7" y="161.5" width="3" height="3"/><rect x="254.5" y="170.7" width="3" height="3"/><rect x="254.5" y="180.2" width="3" height="3"/><rect x="242.7" y="170.7" width="3" height="3"/><rect x="242.7" y="180.2" width="3" height="3"/><rect x="254.5" y="189.4" width="3" height="3"/><rect x="254.5" y="198.9" width="3" height="3"/><rect x="242.7" y="189.4" width="3" height="3"/><rect x="242.7" y="198.9" width="3" height="3"/><rect x="254.5" y="208.2" width="3" height="3"/><rect x="254.5" y="217.7" width="3" height="3"/><rect x="242.7" y="208.2" width="3" height="3"/><rect x="242.7" y="217.7" width="3" height="3"/><rect x="254.5" y="226.9" width="3" height="3"/><rect x="254.5" y="236.4" width="3" height="3"/><rect x="242.7" y="226.9" width="3" height="3"/><rect x="242.7" y="236.4" width="3" height="3"/><rect x="254.5" y="245.6" width="3" height="3"/><rect x="254.5" y="255.1" width="3" height="3"/><rect x="242.7" y="245.6" width="3" height="3"/><rect x="242.7" y="255.1" width="3" height="3"/><rect x="254.5" y="264.3" width="3" height="3"/><rect x="254.5" y="273.8" width="3" height="3"/><rect x="242.7" y="264.3" width="3" height="3"/><rect x="242.7" y="273.8" width="3" height="3"/><rect x="254.5" y="283.1" width="3" height="3"/><rect x="254.5" y="292.6" width="3" height="3"/><rect x="242.7" y="283.1" width="3" height="3"/><rect x="242.7" y="292.6" width="3" height="3"/><rect x="254.5" y="301.8" width="3" height="3"/><rect x="254.5" y="311.3" width="3" height="3"/><rect x="242.7" y="301.8" width="3" height="3"/><rect x="242.7" y="311.3" width="3" height="3"/><rect x="254.5" y="320.5" width="3" height="3"/><rect x="254.5" y="330.0" width="3" height="3"/><rect x="242.7" y="320.5" width="3" height="3"/><rect x="242.7" y="330.0" width="3" height="3"/><rect x="254.5" y="339.3" width="3" height="3"/><rect x="254.5" y="348.8" width="3" height="3"/><rect x="242.7" y="339.3" width="3" height="3"/><rect x="242.7" y="348.8" width="3" height="3"/><rect x="254.5" y="358.0" width="3" height="3"/><rect x="254.5" y="367.5" width="3" height="3"/><rect x="242.7" y="358.0" width="3" height="3"/><rect x="242.7" y="367.5" width="3" height="3"/><rect x="254.5" y="376.7" width="3" height="3"/><rect x="254.5" y="386.2" width="3" height="3"/><rect x="242.7" y="376.7" width="3" height="3"/><rect x="242.7" y="386.2" width="3" height="3"/><rect x="254.5" y="395.4" width="3" height="3"/><rect x="254.5" y="404.9" width="3" height="3"/><rect x="242.7" y="395.4" width="3" height="3"/><rect x="242.7" y="404.9" width="3" height="3"/><rect x="254.5" y="414.2" width="3" height="3"/><rect x="254.5" y="423.7" width="3" height="3"/><rect x="242.7" y="414.2" width="3" height="3"/><rect x="242.7" y="423.7" width="3" height="3"/><rect x="254.5" y="432.9" width="3" height="3"/><rect x="254.5" y="442.4" width="3" height="3"/><rect x="242.7" y="432.9" width="3" height="3"/><rect x="242.7" y="442.4" width="3" height="3"/><rect x="254.5" y="451.6" width="3" height="3"/><rect x="254.5" y="461.1" width="3" height="3"/><rect x="242.7" y="451.6" width="3" height="3"/><rect x="242.7" y="461.1" width="3" height="3"/><rect x="254.5" y="470.4" width="3" height="3"/><rect x="254.5" y="479.0" width="3" height="3"/><rect x="242.7" y="470.4" width="3" height="3"/><rect x="242.7" y="479.0" width="3" height="3"/><rect x="233.5" y="103.5" width="3" height="3"/><rect x="242.7" y="103.5" width="3" height="3"/></g><path d="M295 106 C291 140 281 175 282 210 C283 255 297 290 296 335 C295 385 284 420 283.5 454" stroke="#4d7cf8" stroke-width="11" fill="none" stroke-linecap="round"/><path d="M295 106 C291 140 281 175 282 210 C283 255 297 290 296 335 C295 385 284 420 283.5 454" stroke="#000" stroke-width="9.8" fill="none" stroke-linecap="round"/><circle cx="295" cy="106.8" r="2.6" fill="#fff" stroke="#4d7cf8" stroke-width="1"/><path d="M310.5 106 C306.5 140 296.5 175 297.5 210 C298.5 255 312.5 290 311.5 335 C310.5 385 299.5 420 299.0 454" stroke="#4d7cf8" stroke-width="11" fill="none" stroke-linecap="round"/><path d="M310.5 106 C306.5 140 296.5 175 297.5 210 C298.5 255 312.5 290 311.5 335 C310.5 385 299.5 420 299.0 454" stroke="#000" stroke-width="9.8" fill="none" stroke-linecap="round"/><circle cx="310.5" cy="106.8" r="2.6" fill="#fff" stroke="#4d7cf8" stroke-width="1"/><g fill="#4d7cf8"><rect x="288.3" y="101.0" width="2.8" height="2.8"/><rect x="298.9" y="105.2" width="2.8" height="2.8"/><rect x="283.6" y="138.5" width="2.8" height="2.8"/><rect x="294.1" y="136.4" width="2.8" height="2.8"/><rect x="278.0" y="165.0" width="2.8" height="2.8"/><rect x="288.5" y="169.5" width="2.8" height="2.8"/><rect x="275.3" y="205.7" width="2.8" height="2.8"/><rect x="285.9" y="208.5" width="2.8" height="2.8"/><rect x="279.0" y="251.7" width="2.8" height="2.8"/><rect x="289.5" y="246.1" width="2.8" height="2.8"/><rect x="285.5" y="283.4" width="2.8" height="2.8"/><rect x="296.0" y="284.7" width="2.8" height="2.8"/><rect x="289.3" y="330.5" width="2.8" height="2.8"/><rect x="299.9" y="333.7" width="2.8" height="2.8"/><rect x="286.3" y="378.3" width="2.8" height="2.8"/><rect x="296.8" y="375.6" width="2.8" height="2.8"/><rect x="280.9" y="408.9" width="2.8" height="2.8"/><rect x="291.3" y="413.4" width="2.8" height="2.8"/><rect x="276.6" y="452.6" width="2.8" height="2.8"/><rect x="287.6" y="452.6" width="2.8" height="2.8"/><rect x="282.1" y="458.1" width="2.8" height="2.8"/><rect x="289.6" y="103.1" width="2.8" height="2.8"/><rect x="297.6" y="104.1" width="2.8" height="2.8"/><rect x="303.8" y="101.0" width="2.8" height="2.8"/><rect x="314.4" y="105.2" width="2.8" height="2.8"/><rect x="299.1" y="138.5" width="2.8" height="2.8"/><rect x="309.6" y="136.4" width="2.8" height="2.8"/><rect x="293.5" y="165.0" width="2.8" height="2.8"/><rect x="304.0" y="169.5" width="2.8" height="2.8"/><rect x="290.8" y="205.7" width="2.8" height="2.8"/><rect x="301.4" y="208.5" width="2.8" height="2.8"/><rect x="294.5" y="251.7" width="2.8" height="2.8"/><rect x="305.0" y="246.1" width="2.8" height="2.8"/><rect x="301.0" y="283.4" width="2.8" height="2.8"/><rect x="311.5" y="284.7" width="2.8" height="2.8"/><rect x="304.8" y="330.5" width="2.8" height="2.8"/><rect x="315.4" y="333.7" width="2.8" height="2.8"/><rect x="301.8" y="378.3" width="2.8" height="2.8"/><rect x="312.3" y="375.6" width="2.8" height="2.8"/><rect x="296.4" y="408.9" width="2.8" height="2.8"/><rect x="306.8" y="413.4" width="2.8" height="2.8"/><rect x="292.1" y="452.6" width="2.8" height="2.8"/><rect x="303.1" y="452.6" width="2.8" height="2.8"/><rect x="297.6" y="458.1" width="2.8" height="2.8"/><rect x="305.1" y="103.1" width="2.8" height="2.8"/><rect x="313.1" y="104.1" width="2.8" height="2.8"/></g><path d="M334.45 109.30 L334.47 109.68 L334.53 110.07 L334.64 110.45 L334.78 110.83 L334.97 111.22 L335.19 111.60 L335.44 111.98 L335.73 112.37 L336.05 112.75 L336.39 113.13 L336.76 113.52 L337.14 113.90 L337.55 114.28 L337.97 114.67 L338.39 115.05 L338.82 115.44 L339.25 115.82 L339.67 116.20 L340.09 116.59 L340.50 116.97 L340.89 117.35 L341.26 117.74 L341.61 118.12 L341.93 118.50 L342.22 118.89 L342.48 119.27 L342.71 119.65 L342.89 120.04 L343.04 120.42 L343.15 120.80 L343.22 121.19 L343.25 121.57 L343.23 121.95 L343.18 122.34 L343.08 122.72 L342.94 123.10 L342.76 123.49 L342.55 123.87 L342.30 124.25 L342.02 124.64 L341.70 125.02 L341.36 125.40 L341.00 125.79 L340.61 126.17 L340.21 126.55 L339.79 126.94 L339.37 127.32 L338.94 127.71 L338.51 128.09 L338.09 128.47 L337.67 128.86 L337.26 129.24 L336.87 129.62 L336.49 130.01 L336.14 130.39 L335.82 130.77 L335.52 131.16 L335.25 131.54 L335.02 131.92 L334.83 132.31 L334.67 132.69 L334.56 133.07 L334.48 133.46 L334.45 133.84 L334.46 134.22 L334.51 134.61 L334.60 134.99 L334.74 135.37 L334.91 135.76 L335.12 136.14 L335.36 136.52 L335.64 136.91 L335.95 137.29 L336.29 137.67 L336.65 138.06 L337.03 138.44 L337.43 138.83 L337.85 139.21 L338.27 139.59 L338.70 139.98 L339.13 140.36 L339.55 140.74 L339.97 141.13 L340.38 141.51 L340.78 141.89 L341.16 142.28 L341.51 142.66 L341.84 143.04 L342.14 143.43 L342.41 143.81 L342.65 144.19 L342.84 144.58 L343.01 144.96 L343.13 145.34 L343.21 145.73 L343.25 146.11 L343.24 146.49 L343.20 146.88 L343.11 147.26 L342.98 147.64 L342.82 148.03 L342.61 148.41 L342.37 148.79 L342.10 149.18 L341.79 149.56 L341.46 149.95 L341.10 150.33 L340.72 150.71 L340.33 151.10 L339.91 151.48 L339.49 151.86 L339.06 152.25 L338.64 152.63 L338.21 153.01 L337.79 153.40 L337.37 153.78 L336.98 154.16 L336.60 154.55 L336.24 154.93 L335.91 155.31 L335.60 155.70 L335.33 156.08 L335.09 156.46 L334.88 156.85 L334.72 157.23 L334.59 157.61 L334.50 158.00 L334.46 158.38 L334.45 158.76 L334.49 159.15 L334.57 159.53 L334.69 159.91 L334.86 160.30 L335.05 160.68 L335.29 161.06 L335.56 161.45 L335.86 161.83 L336.19 162.22 L336.54 162.60 L336.92 162.98 L337.32 163.37 L337.73 163.75 L338.15 164.13 L338.57 164.52 L339.00 164.90 L339.43 165.28 L339.85 165.67 L340.27 166.05 L340.67 166.43 L341.05 166.82 L341.41 167.20 L341.75 167.58 L342.06 167.97 L342.34 168.35 L342.58 168.73 L342.79 169.12 L342.96 169.50 L343.10 169.88 L343.19 170.27 L343.24 170.65 L343.25 171.03 L343.22 171.42 L343.14 171.80 L343.03 172.18 L342.87 172.57 L342.68 172.95 L342.45 173.34 L342.18 173.72 L341.88 174.10 L341.56 174.49 L341.21 174.87 L340.83 175.25 L340.44 175.64 L340.03 176.02 L339.61 176.40 L339.19 176.79 L338.76 177.17 L338.33 177.55 L337.91 177.94 L337.49 178.32 L337.09 178.70 L336.70 179.09 L336.34 179.47 L336.00 179.85 L335.68 180.24 L335.40 180.62 L335.15 181.00 L334.94 181.39 L334.76 181.77 L334.62 182.15 L334.52 182.54 L334.47 182.92 L334.45 183.30 L334.48 183.69 L334.55 184.07 L334.66 184.46 L334.81 184.84 L334.99 185.22 L335.22 185.61 L335.48 185.99 L335.77 186.37 L336.09 186.76 L336.44 187.14 L336.81 187.52 L337.20 187.91 L337.61 188.29 L338.03 188.67 L338.45 189.06 L338.88 189.44 L339.31 189.82 L339.73 190.21 L340.15 190.59 L340.56 190.97 L340.94 191.36 L341.31 191.74 L341.65 192.12 L341.97 192.51 L342.26 192.89 L342.51 193.27 L342.73 193.66 L342.92 194.04 L343.06 194.42 L343.17 194.81 L343.23 195.19 L343.25 195.57 L343.23 195.96 L343.17 196.34 L343.06 196.73 L342.92 197.11 L342.73 197.49 L342.51 197.88 L342.26 198.26 L341.97 198.64 L341.65 199.03 L341.31 199.41 L340.94 199.79 L340.56 200.18 L340.15 200.56 L339.73 200.94 L339.31 201.33 L338.88 201.71 L338.45 202.09 L338.03 202.48 L337.61 202.86 L337.20 203.24 L336.81 203.63 L336.44 204.01 L336.09 204.39 L335.77 204.78 L335.48 205.16 L335.22 205.54 L334.99 205.93 L334.81 206.31 L334.66 206.69 L334.55 207.08 L334.48 207.46 L334.45 207.85 L334.47 208.23 L334.52 208.61 L334.62 209.00 L334.76 209.38 L334.94 209.76 L335.15 210.15 L335.40 210.53 L335.68 210.91 L336.00 211.30 L336.34 211.68 L336.70 212.06 L337.09 212.45 L337.49 212.83 L337.91 213.21 L338.33 213.60 L338.76 213.98 L339.19 214.36 L339.61 214.75 L340.03 215.13 L340.44 215.51 L340.83 215.90 L341.21 216.28 L341.56 216.66 L341.88 217.05 L342.18 217.43 L342.45 217.81 L342.68 218.20 L342.87 218.58 L343.03 218.97 L343.14 219.35 L343.22 219.73 L343.25 220.12 L343.24 220.50 L343.19 220.88 L343.10 221.27 L342.96 221.65 L342.79 222.03 L342.58 222.42 L342.34 222.80 L342.06 223.18 L341.75 223.57 L341.41 223.95 L341.05 224.33 L340.67 224.72 L340.27 225.10 L339.85 225.48 L339.43 225.87 L339.00 226.25 L338.57 226.63 L338.15 227.02 L337.73 227.40 L337.32 227.78 L336.92 228.17 L336.54 228.55 L336.19 228.93 L335.86 229.32 L335.56 229.70 L335.29 230.08 L335.05 230.47 L334.86 230.85 L334.69 231.24 L334.57 231.62 L334.49 232.00 L334.45 232.39 L334.46 232.77 L334.50 233.15 L334.59 233.54 L334.72 233.92 L334.88 234.30 L335.09 234.69 L335.33 235.07 L335.60 235.45 L335.91 235.84 L336.24 236.22 L336.60 236.60 L336.98 236.99 L337.37 237.37 L337.79 237.75 L338.21 238.14 L338.64 238.52 L339.06 238.90 L339.49 239.29 L339.91 239.67 L340.33 240.05 L340.72 240.44 L341.10 240.82 L341.46 241.20 L341.79 241.59 L342.10 241.97 L342.37 242.36 L342.61 242.74 L342.82 243.12 L342.98 243.51 L343.11 243.89 L343.20 244.27 L343.24 244.66 L343.25 245.04 L343.21 245.42 L343.13 245.81 L343.01 246.19 L342.84 246.57 L342.65 246.96 L342.41 247.34 L342.14 247.72 L341.84 248.11 L341.51 248.49 L341.16 248.87 L340.78 249.26 L340.38 249.64 L339.97 250.02 L339.55 250.41 L339.13 250.79 L338.70 251.17 L338.27 251.56 L337.85 251.94 L337.43 252.32 L337.03 252.71 L336.65 253.09 L336.29 253.48 L335.95 253.86 L335.64 254.24 L335.36 254.63 L335.12 255.01 L334.91 255.39 L334.74 255.78 L334.60 256.16 L334.51 256.54 L334.46 256.93 L334.45 257.31 L334.48 257.69 L334.56 258.08 L334.67 258.46 L334.83 258.84 L335.02 259.23 L335.25 259.61 L335.52 259.99 L335.82 260.38 L336.14 260.76 L336.49 261.14 L336.87 261.53 L337.26 261.91 L337.67 262.29 L338.09 262.68 L338.51 263.06 L338.94 263.44 L339.37 263.83 L339.79 264.21 L340.21 264.59 L340.61 264.98 L341.00 265.36 L341.36 265.75 L341.70 266.13 L342.02 266.51 L342.30 266.90 L342.55 267.28 L342.76 267.66 L342.94 268.05 L343.08 268.43 L343.18 268.81 L343.23 269.20 L343.25 269.58 L343.22 269.96 L343.15 270.35 L343.04 270.73 L342.89 271.11 L342.71 271.50 L342.48 271.88 L342.22 272.26 L341.93 272.65 L341.61 273.03 L341.26 273.41 L340.89 273.80 L340.50 274.18 L340.09 274.56 L339.67 274.95 L339.25 275.33 L338.82 275.71 L338.39 276.10 L337.97 276.48 L337.55 276.87 L337.14 277.25 L336.76 277.63 L336.39 278.02 L336.05 278.40 L335.73 278.78 L335.44 279.17 L335.19 279.55 L334.97 279.93 L334.78 280.32 L334.64 280.70 L334.53 281.08 L334.47 281.47 L334.45 281.85 L334.47 282.23 L334.53 282.62 L334.64 283.00 L334.78 283.38 L334.97 283.77 L335.19 284.15 L335.44 284.53 L335.73 284.92 L336.05 285.30 L336.39 285.68 L336.76 286.07 L337.14 286.45 L337.55 286.83 L337.97 287.22 L338.39 287.60 L338.82 287.99 L339.25 288.37 L339.67 288.75 L340.09 289.14 L340.50 289.52 L340.89 289.90 L341.26 290.29 L341.61 290.67 L341.93 291.05 L342.22 291.44 L342.48 291.82 L342.71 292.20 L342.89 292.59 L343.04 292.97 L343.15 293.35 L343.22 293.74 L343.25 294.12 L343.23 294.50 L343.18 294.89 L343.08 295.27 L342.94 295.65 L342.76 296.04 L342.55 296.42 L342.30 296.80 L342.02 297.19 L341.70 297.57 L341.36 297.95 L341.00 298.34 L340.61 298.72 L340.21 299.10 L339.79 299.49 L339.37 299.87 L338.94 300.26 L338.51 300.64 L338.09 301.02 L337.67 301.41 L337.26 301.79 L336.87 302.17 L336.49 302.56 L336.14 302.94 L335.82 303.32 L335.52 303.71 L335.25 304.09 L335.02 304.47 L334.83 304.86 L334.67 305.24 L334.56 305.62 L334.48 306.01 L334.45 306.39 L334.46 306.77 L334.51 307.16 L334.60 307.54 L334.74 307.92 L334.91 308.31 L335.12 308.69 L335.36 309.07 L335.64 309.46 L335.95 309.84 L336.29 310.22 L336.65 310.61 L337.03 310.99 L337.43 311.38 L337.85 311.76 L338.27 312.14 L338.70 312.53 L339.13 312.91 L339.55 313.29 L339.97 313.68 L340.38 314.06 L340.78 314.44 L341.16 314.83 L341.51 315.21 L341.84 315.59 L342.14 315.98 L342.41 316.36 L342.65 316.74 L342.84 317.13 L343.01 317.51 L343.13 317.89 L343.21 318.28 L343.25 318.66 L343.24 319.04 L343.20 319.43 L343.11 319.81 L342.98 320.19 L342.82 320.58 L342.61 320.96 L342.37 321.34 L342.10 321.73 L341.79 322.11 L341.46 322.50 L341.10 322.88 L340.72 323.26 L340.33 323.65 L339.91 324.03 L339.49 324.41 L339.06 324.80 L338.64 325.18 L338.21 325.56 L337.79 325.95 L337.37 326.33 L336.98 326.71 L336.60 327.10 L336.24 327.48 L335.91 327.86 L335.60 328.25 L335.33 328.63 L335.09 329.01 L334.88 329.40 L334.72 329.78 L334.59 330.16 L334.50 330.55 L334.46 330.93 L334.45 331.31 L334.49 331.70 L334.57 332.08 L334.69 332.46 L334.86 332.85 L335.05 333.23 L335.29 333.61 L335.56 334.00 L335.86 334.38 L336.19 334.77 L336.54 335.15 L336.92 335.53 L337.32 335.92 L337.73 336.30 L338.15 336.68 L338.57 337.07 L339.00 337.45 L339.43 337.83 L339.85 338.22 L340.27 338.60 L340.67 338.98 L341.05 339.37 L341.41 339.75 L341.75 340.13 L342.06 340.52 L342.34 340.90 L342.58 341.28 L342.79 341.67 L342.96 342.05 L343.10 342.43 L343.19 342.82 L343.24 343.20 L343.25 343.58 L343.22 343.97 L343.14 344.35 L343.03 344.73 L342.87 345.12 L342.68 345.50 L342.45 345.89 L342.18 346.27 L341.88 346.65 L341.56 347.04 L341.21 347.42 L340.83 347.80 L340.44 348.19 L340.03 348.57 L339.61 348.95 L339.19 349.34 L338.76 349.72 L338.33 350.10 L337.91 350.49 L337.49 350.87 L337.09 351.25 L336.70 351.64 L336.34 352.02 L336.00 352.40 L335.68 352.79 L335.40 353.17 L335.15 353.55 L334.94 353.94 L334.76 354.32 L334.62 354.70 L334.52 355.09 L334.47 355.47 L334.45 355.85 L334.48 356.24 L334.55 356.62 L334.66 357.01 L334.81 357.39 L334.99 357.77 L335.22 358.16 L335.48 358.54 L335.77 358.92 L336.09 359.31 L336.44 359.69 L336.81 360.07 L337.20 360.46 L337.61 360.84 L338.03 361.22 L338.45 361.61 L338.88 361.99 L339.31 362.37 L339.73 362.76 L340.15 363.14 L340.56 363.52 L340.94 363.91 L341.31 364.29 L341.65 364.67 L341.97 365.06 L342.26 365.44 L342.51 365.82 L342.73 366.21 L342.92 366.59 L343.06 366.97 L343.17 367.36 L343.23 367.74 L343.25 368.12 L343.23 368.51 L343.17 368.89 L343.06 369.28 L342.92 369.66 L342.73 370.04 L342.51 370.43 L342.26 370.81 L341.97 371.19 L341.65 371.58 L341.31 371.96 L340.94 372.34 L340.56 372.73 L340.15 373.11 L339.73 373.49 L339.31 373.88 L338.88 374.26 L338.45 374.64 L338.03 375.03 L337.61 375.41 L337.20 375.79 L336.81 376.18 L336.44 376.56 L336.09 376.94 L335.77 377.33 L335.48 377.71 L335.22 378.09 L334.99 378.48 L334.81 378.86 L334.66 379.24 L334.55 379.63 L334.48 380.01 L334.45 380.40 L334.47 380.78 L334.52 381.16 L334.62 381.55 L334.76 381.93 L334.94 382.31 L335.15 382.70 L335.40 383.08 L335.68 383.46 L336.00 383.85 L336.34 384.23 L336.70 384.61 L337.09 385.00 L337.49 385.38 L337.91 385.76 L338.33 386.15 L338.76 386.53 L339.19 386.91 L339.61 387.30 L340.03 387.68 L340.44 388.06 L340.83 388.45 L341.21 388.83 L341.56 389.21 L341.88 389.60 L342.18 389.98 L342.45 390.36 L342.68 390.75 L342.87 391.13 L343.03 391.52 L343.14 391.90 L343.22 392.28 L343.25 392.67 L343.24 393.05 L343.19 393.43 L343.10 393.82 L342.96 394.20 L342.79 394.58 L342.58 394.97 L342.34 395.35 L342.06 395.73 L341.75 396.12 L341.41 396.50 L341.05 396.88 L340.67 397.27 L340.27 397.65 L339.85 398.03 L339.43 398.42 L339.00 398.80 L338.57 399.18 L338.15 399.57 L337.73 399.95 L337.32 400.33 L336.92 400.72 L336.54 401.10 L336.19 401.48 L335.86 401.87 L335.56 402.25 L335.29 402.63 L335.05 403.02 L334.86 403.40 L334.69 403.79 L334.57 404.17 L334.49 404.55 L334.45 404.94 L334.46 405.32 L334.50 405.70 L334.59 406.09 L334.72 406.47 L334.88 406.85 L335.09 407.24 L335.33 407.62 L335.60 408.00 L335.91 408.39 L336.24 408.77 L336.60 409.15 L336.98 409.54 L337.37 409.92 L337.79 410.30 L338.21 410.69 L338.64 411.07 L339.06 411.45 L339.49 411.84 L339.91 412.22 L340.33 412.60 L340.72 412.99 L341.10 413.37 L341.46 413.75 L341.79 414.14 L342.10 414.52 L342.37 414.91 L342.61 415.29 L342.82 415.67 L342.98 416.06 L343.11 416.44 L343.20 416.82 L343.24 417.21 L343.25 417.59 L343.21 417.97 L343.13 418.36 L343.01 418.74 L342.84 419.12 L342.65 419.51 L342.41 419.89 L342.14 420.27 L341.84 420.66 L341.51 421.04 L341.16 421.42 L340.78 421.81 L340.38 422.19 L339.97 422.57 L339.55 422.96 L339.13 423.34 L338.70 423.72 L338.27 424.11 L337.85 424.49 L337.43 424.87 L337.03 425.26 L336.65 425.64 L336.29 426.03 L335.95 426.41 L335.64 426.79 L335.36 427.18 L335.12 427.56 L334.91 427.94 L334.74 428.33 L334.60 428.71 L334.51 429.09 L334.46 429.48 L334.45 429.86 L334.48 430.24 L334.56 430.63 L334.67 431.01 L334.83 431.39 L335.02 431.78 L335.25 432.16 L335.52 432.54 L335.82 432.93 L336.14 433.31 L336.49 433.69 L336.87 434.08 L337.26 434.46 L337.67 434.84 L338.09 435.23 L338.51 435.61 L338.94 435.99 L339.37 436.38 L339.79 436.76 L340.21 437.14 L340.61 437.53 L341.00 437.91 L341.36 438.30 L341.70 438.68 L342.02 439.06 L342.30 439.45 L342.55 439.83 L342.76 440.21 L342.94 440.60 L343.08 440.98 L343.18 441.36 L343.23 441.75 L343.25 442.13 L343.22 442.51 L343.15 442.90 L343.04 443.28 L342.89 443.66 L342.71 444.05 L342.48 444.43 L342.22 444.81 L341.93 445.20 L341.61 445.58 L341.26 445.96 L340.89 446.35 L340.50 446.73 L340.09 447.11 L339.67 447.50 L339.25 447.88 L338.82 448.26 L338.39 448.65 L337.97 449.03 L337.55 449.42 L337.14 449.80 L336.76 450.18 L336.39 450.57 L336.05 450.95 L335.73 451.33 L335.44 451.72 L335.19 452.10 L334.97 452.48 L334.78 452.87 L334.64 453.25 L334.53 453.63 L334.47 454.02 L334.45 454.40" stroke="#4d7cf8" stroke-width="7.6000000000000005" fill="none" stroke-linecap="round"/><path d="M334.45 109.30 L334.47 109.68 L334.53 110.07 L334.64 110.45 L334.78 110.83 L334.97 111.22 L335.19 111.60 L335.44 111.98 L335.73 112.37 L336.05 112.75 L336.39 113.13 L336.76 113.52 L337.14 113.90 L337.55 114.28 L337.97 114.67 L338.39 115.05 L338.82 115.44 L339.25 115.82 L339.67 116.20 L340.09 116.59 L340.50 116.97 L340.89 117.35 L341.26 117.74 L341.61 118.12 L341.93 118.50 L342.22 118.89 L342.48 119.27 L342.71 119.65 L342.89 120.04 L343.04 120.42 L343.15 120.80 L343.22 121.19 L343.25 121.57 L343.23 121.95 L343.18 122.34 L343.08 122.72 L342.94 123.10 L342.76 123.49 L342.55 123.87 L342.30 124.25 L342.02 124.64 L341.70 125.02 L341.36 125.40 L341.00 125.79 L340.61 126.17 L340.21 126.55 L339.79 126.94 L339.37 127.32 L338.94 127.71 L338.51 128.09 L338.09 128.47 L337.67 128.86 L337.26 129.24 L336.87 129.62 L336.49 130.01 L336.14 130.39 L335.82 130.77 L335.52 131.16 L335.25 131.54 L335.02 131.92 L334.83 132.31 L334.67 132.69 L334.56 133.07 L334.48 133.46 L334.45 133.84 L334.46 134.22 L334.51 134.61 L334.60 134.99 L334.74 135.37 L334.91 135.76 L335.12 136.14 L335.36 136.52 L335.64 136.91 L335.95 137.29 L336.29 137.67 L336.65 138.06 L337.03 138.44 L337.43 138.83 L337.85 139.21 L338.27 139.59 L338.70 139.98 L339.13 140.36 L339.55 140.74 L339.97 141.13 L340.38 141.51 L340.78 141.89 L341.16 142.28 L341.51 142.66 L341.84 143.04 L342.14 143.43 L342.41 143.81 L342.65 144.19 L342.84 144.58 L343.01 144.96 L343.13 145.34 L343.21 145.73 L343.25 146.11 L343.24 146.49 L343.20 146.88 L343.11 147.26 L342.98 147.64 L342.82 148.03 L342.61 148.41 L342.37 148.79 L342.10 149.18 L341.79 149.56 L341.46 149.95 L341.10 150.33 L340.72 150.71 L340.33 151.10 L339.91 151.48 L339.49 151.86 L339.06 152.25 L338.64 152.63 L338.21 153.01 L337.79 153.40 L337.37 153.78 L336.98 154.16 L336.60 154.55 L336.24 154.93 L335.91 155.31 L335.60 155.70 L335.33 156.08 L335.09 156.46 L334.88 156.85 L334.72 157.23 L334.59 157.61 L334.50 158.00 L334.46 158.38 L334.45 158.76 L334.49 159.15 L334.57 159.53 L334.69 159.91 L334.86 160.30 L335.05 160.68 L335.29 161.06 L335.56 161.45 L335.86 161.83 L336.19 162.22 L336.54 162.60 L336.92 162.98 L337.32 163.37 L337.73 163.75 L338.15 164.13 L338.57 164.52 L339.00 164.90 L339.43 165.28 L339.85 165.67 L340.27 166.05 L340.67 166.43 L341.05 166.82 L341.41 167.20 L341.75 167.58 L342.06 167.97 L342.34 168.35 L342.58 168.73 L342.79 169.12 L342.96 169.50 L343.10 169.88 L343.19 170.27 L343.24 170.65 L343.25 171.03 L343.22 171.42 L343.14 171.80 L343.03 172.18 L342.87 172.57 L342.68 172.95 L342.45 173.34 L342.18 173.72 L341.88 174.10 L341.56 174.49 L341.21 174.87 L340.83 175.25 L340.44 175.64 L340.03 176.02 L339.61 176.40 L339.19 176.79 L338.76 177.17 L338.33 177.55 L337.91 177.94 L337.49 178.32 L337.09 178.70 L336.70 179.09 L336.34 179.47 L336.00 179.85 L335.68 180.24 L335.40 180.62 L335.15 181.00 L334.94 181.39 L334.76 181.77 L334.62 182.15 L334.52 182.54 L334.47 182.92 L334.45 183.30 L334.48 183.69 L334.55 184.07 L334.66 184.46 L334.81 184.84 L334.99 185.22 L335.22 185.61 L335.48 185.99 L335.77 186.37 L336.09 186.76 L336.44 187.14 L336.81 187.52 L337.20 187.91 L337.61 188.29 L338.03 188.67 L338.45 189.06 L338.88 189.44 L339.31 189.82 L339.73 190.21 L340.15 190.59 L340.56 190.97 L340.94 191.36 L341.31 191.74 L341.65 192.12 L341.97 192.51 L342.26 192.89 L342.51 193.27 L342.73 193.66 L342.92 194.04 L343.06 194.42 L343.17 194.81 L343.23 195.19 L343.25 195.57 L343.23 195.96 L343.17 196.34 L343.06 196.73 L342.92 197.11 L342.73 197.49 L342.51 197.88 L342.26 198.26 L341.97 198.64 L341.65 199.03 L341.31 199.41 L340.94 199.79 L340.56 200.18 L340.15 200.56 L339.73 200.94 L339.31 201.33 L338.88 201.71 L338.45 202.09 L338.03 202.48 L337.61 202.86 L337.20 203.24 L336.81 203.63 L336.44 204.01 L336.09 204.39 L335.77 204.78 L335.48 205.16 L335.22 205.54 L334.99 205.93 L334.81 206.31 L334.66 206.69 L334.55 207.08 L334.48 207.46 L334.45 207.85 L334.47 208.23 L334.52 208.61 L334.62 209.00 L334.76 209.38 L334.94 209.76 L335.15 210.15 L335.40 210.53 L335.68 210.91 L336.00 211.30 L336.34 211.68 L336.70 212.06 L337.09 212.45 L337.49 212.83 L337.91 213.21 L338.33 213.60 L338.76 213.98 L339.19 214.36 L339.61 214.75 L340.03 215.13 L340.44 215.51 L340.83 215.90 L341.21 216.28 L341.56 216.66 L341.88 217.05 L342.18 217.43 L342.45 217.81 L342.68 218.20 L342.87 218.58 L343.03 218.97 L343.14 219.35 L343.22 219.73 L343.25 220.12 L343.24 220.50 L343.19 220.88 L343.10 221.27 L342.96 221.65 L342.79 222.03 L342.58 222.42 L342.34 222.80 L342.06 223.18 L341.75 223.57 L341.41 223.95 L341.05 224.33 L340.67 224.72 L340.27 225.10 L339.85 225.48 L339.43 225.87 L339.00 226.25 L338.57 226.63 L338.15 227.02 L337.73 227.40 L337.32 227.78 L336.92 228.17 L336.54 228.55 L336.19 228.93 L335.86 229.32 L335.56 229.70 L335.29 230.08 L335.05 230.47 L334.86 230.85 L334.69 231.24 L334.57 231.62 L334.49 232.00 L334.45 232.39 L334.46 232.77 L334.50 233.15 L334.59 233.54 L334.72 233.92 L334.88 234.30 L335.09 234.69 L335.33 235.07 L335.60 235.45 L335.91 235.84 L336.24 236.22 L336.60 236.60 L336.98 236.99 L337.37 237.37 L337.79 237.75 L338.21 238.14 L338.64 238.52 L339.06 238.90 L339.49 239.29 L339.91 239.67 L340.33 240.05 L340.72 240.44 L341.10 240.82 L341.46 241.20 L341.79 241.59 L342.10 241.97 L342.37 242.36 L342.61 242.74 L342.82 243.12 L342.98 243.51 L343.11 243.89 L343.20 244.27 L343.24 244.66 L343.25 245.04 L343.21 245.42 L343.13 245.81 L343.01 246.19 L342.84 246.57 L342.65 246.96 L342.41 247.34 L342.14 247.72 L341.84 248.11 L341.51 248.49 L341.16 248.87 L340.78 249.26 L340.38 249.64 L339.97 250.02 L339.55 250.41 L339.13 250.79 L338.70 251.17 L338.27 251.56 L337.85 251.94 L337.43 252.32 L337.03 252.71 L336.65 253.09 L336.29 253.48 L335.95 253.86 L335.64 254.24 L335.36 254.63 L335.12 255.01 L334.91 255.39 L334.74 255.78 L334.60 256.16 L334.51 256.54 L334.46 256.93 L334.45 257.31 L334.48 257.69 L334.56 258.08 L334.67 258.46 L334.83 258.84 L335.02 259.23 L335.25 259.61 L335.52 259.99 L335.82 260.38 L336.14 260.76 L336.49 261.14 L336.87 261.53 L337.26 261.91 L337.67 262.29 L338.09 262.68 L338.51 263.06 L338.94 263.44 L339.37 263.83 L339.79 264.21 L340.21 264.59 L340.61 264.98 L341.00 265.36 L341.36 265.75 L341.70 266.13 L342.02 266.51 L342.30 266.90 L342.55 267.28 L342.76 267.66 L342.94 268.05 L343.08 268.43 L343.18 268.81 L343.23 269.20 L343.25 269.58 L343.22 269.96 L343.15 270.35 L343.04 270.73 L342.89 271.11 L342.71 271.50 L342.48 271.88 L342.22 272.26 L341.93 272.65 L341.61 273.03 L341.26 273.41 L340.89 273.80 L340.50 274.18 L340.09 274.56 L339.67 274.95 L339.25 275.33 L338.82 275.71 L338.39 276.10 L337.97 276.48 L337.55 276.87 L337.14 277.25 L336.76 277.63 L336.39 278.02 L336.05 278.40 L335.73 278.78 L335.44 279.17 L335.19 279.55 L334.97 279.93 L334.78 280.32 L334.64 280.70 L334.53 281.08 L334.47 281.47 L334.45 281.85 L334.47 282.23 L334.53 282.62 L334.64 283.00 L334.78 283.38 L334.97 283.77 L335.19 284.15 L335.44 284.53 L335.73 284.92 L336.05 285.30 L336.39 285.68 L336.76 286.07 L337.14 286.45 L337.55 286.83 L337.97 287.22 L338.39 287.60 L338.82 287.99 L339.25 288.37 L339.67 288.75 L340.09 289.14 L340.50 289.52 L340.89 289.90 L341.26 290.29 L341.61 290.67 L341.93 291.05 L342.22 291.44 L342.48 291.82 L342.71 292.20 L342.89 292.59 L343.04 292.97 L343.15 293.35 L343.22 293.74 L343.25 294.12 L343.23 294.50 L343.18 294.89 L343.08 295.27 L342.94 295.65 L342.76 296.04 L342.55 296.42 L342.30 296.80 L342.02 297.19 L341.70 297.57 L341.36 297.95 L341.00 298.34 L340.61 298.72 L340.21 299.10 L339.79 299.49 L339.37 299.87 L338.94 300.26 L338.51 300.64 L338.09 301.02 L337.67 301.41 L337.26 301.79 L336.87 302.17 L336.49 302.56 L336.14 302.94 L335.82 303.32 L335.52 303.71 L335.25 304.09 L335.02 304.47 L334.83 304.86 L334.67 305.24 L334.56 305.62 L334.48 306.01 L334.45 306.39 L334.46 306.77 L334.51 307.16 L334.60 307.54 L334.74 307.92 L334.91 308.31 L335.12 308.69 L335.36 309.07 L335.64 309.46 L335.95 309.84 L336.29 310.22 L336.65 310.61 L337.03 310.99 L337.43 311.38 L337.85 311.76 L338.27 312.14 L338.70 312.53 L339.13 312.91 L339.55 313.29 L339.97 313.68 L340.38 314.06 L340.78 314.44 L341.16 314.83 L341.51 315.21 L341.84 315.59 L342.14 315.98 L342.41 316.36 L342.65 316.74 L342.84 317.13 L343.01 317.51 L343.13 317.89 L343.21 318.28 L343.25 318.66 L343.24 319.04 L343.20 319.43 L343.11 319.81 L342.98 320.19 L342.82 320.58 L342.61 320.96 L342.37 321.34 L342.10 321.73 L341.79 322.11 L341.46 322.50 L341.10 322.88 L340.72 323.26 L340.33 323.65 L339.91 324.03 L339.49 324.41 L339.06 324.80 L338.64 325.18 L338.21 325.56 L337.79 325.95 L337.37 326.33 L336.98 326.71 L336.60 327.10 L336.24 327.48 L335.91 327.86 L335.60 328.25 L335.33 328.63 L335.09 329.01 L334.88 329.40 L334.72 329.78 L334.59 330.16 L334.50 330.55 L334.46 330.93 L334.45 331.31 L334.49 331.70 L334.57 332.08 L334.69 332.46 L334.86 332.85 L335.05 333.23 L335.29 333.61 L335.56 334.00 L335.86 334.38 L336.19 334.77 L336.54 335.15 L336.92 335.53 L337.32 335.92 L337.73 336.30 L338.15 336.68 L338.57 337.07 L339.00 337.45 L339.43 337.83 L339.85 338.22 L340.27 338.60 L340.67 338.98 L341.05 339.37 L341.41 339.75 L341.75 340.13 L342.06 340.52 L342.34 340.90 L342.58 341.28 L342.79 341.67 L342.96 342.05 L343.10 342.43 L343.19 342.82 L343.24 343.20 L343.25 343.58 L343.22 343.97 L343.14 344.35 L343.03 344.73 L342.87 345.12 L342.68 345.50 L342.45 345.89 L342.18 346.27 L341.88 346.65 L341.56 347.04 L341.21 347.42 L340.83 347.80 L340.44 348.19 L340.03 348.57 L339.61 348.95 L339.19 349.34 L338.76 349.72 L338.33 350.10 L337.91 350.49 L337.49 350.87 L337.09 351.25 L336.70 351.64 L336.34 352.02 L336.00 352.40 L335.68 352.79 L335.40 353.17 L335.15 353.55 L334.94 353.94 L334.76 354.32 L334.62 354.70 L334.52 355.09 L334.47 355.47 L334.45 355.85 L334.48 356.24 L334.55 356.62 L334.66 357.01 L334.81 357.39 L334.99 357.77 L335.22 358.16 L335.48 358.54 L335.77 358.92 L336.09 359.31 L336.44 359.69 L336.81 360.07 L337.20 360.46 L337.61 360.84 L338.03 361.22 L338.45 361.61 L338.88 361.99 L339.31 362.37 L339.73 362.76 L340.15 363.14 L340.56 363.52 L340.94 363.91 L341.31 364.29 L341.65 364.67 L341.97 365.06 L342.26 365.44 L342.51 365.82 L342.73 366.21 L342.92 366.59 L343.06 366.97 L343.17 367.36 L343.23 367.74 L343.25 368.12 L343.23 368.51 L343.17 368.89 L343.06 369.28 L342.92 369.66 L342.73 370.04 L342.51 370.43 L342.26 370.81 L341.97 371.19 L341.65 371.58 L341.31 371.96 L340.94 372.34 L340.56 372.73 L340.15 373.11 L339.73 373.49 L339.31 373.88 L338.88 374.26 L338.45 374.64 L338.03 375.03 L337.61 375.41 L337.20 375.79 L336.81 376.18 L336.44 376.56 L336.09 376.94 L335.77 377.33 L335.48 377.71 L335.22 378.09 L334.99 378.48 L334.81 378.86 L334.66 379.24 L334.55 379.63 L334.48 380.01 L334.45 380.40 L334.47 380.78 L334.52 381.16 L334.62 381.55 L334.76 381.93 L334.94 382.31 L335.15 382.70 L335.40 383.08 L335.68 383.46 L336.00 383.85 L336.34 384.23 L336.70 384.61 L337.09 385.00 L337.49 385.38 L337.91 385.76 L338.33 386.15 L338.76 386.53 L339.19 386.91 L339.61 387.30 L340.03 387.68 L340.44 388.06 L340.83 388.45 L341.21 388.83 L341.56 389.21 L341.88 389.60 L342.18 389.98 L342.45 390.36 L342.68 390.75 L342.87 391.13 L343.03 391.52 L343.14 391.90 L343.22 392.28 L343.25 392.67 L343.24 393.05 L343.19 393.43 L343.10 393.82 L342.96 394.20 L342.79 394.58 L342.58 394.97 L342.34 395.35 L342.06 395.73 L341.75 396.12 L341.41 396.50 L341.05 396.88 L340.67 397.27 L340.27 397.65 L339.85 398.03 L339.43 398.42 L339.00 398.80 L338.57 399.18 L338.15 399.57 L337.73 399.95 L337.32 400.33 L336.92 400.72 L336.54 401.10 L336.19 401.48 L335.86 401.87 L335.56 402.25 L335.29 402.63 L335.05 403.02 L334.86 403.40 L334.69 403.79 L334.57 404.17 L334.49 404.55 L334.45 404.94 L334.46 405.32 L334.50 405.70 L334.59 406.09 L334.72 406.47 L334.88 406.85 L335.09 407.24 L335.33 407.62 L335.60 408.00 L335.91 408.39 L336.24 408.77 L336.60 409.15 L336.98 409.54 L337.37 409.92 L337.79 410.30 L338.21 410.69 L338.64 411.07 L339.06 411.45 L339.49 411.84 L339.91 412.22 L340.33 412.60 L340.72 412.99 L341.10 413.37 L341.46 413.75 L341.79 414.14 L342.10 414.52 L342.37 414.91 L342.61 415.29 L342.82 415.67 L342.98 416.06 L343.11 416.44 L343.20 416.82 L343.24 417.21 L343.25 417.59 L343.21 417.97 L343.13 418.36 L343.01 418.74 L342.84 419.12 L342.65 419.51 L342.41 419.89 L342.14 420.27 L341.84 420.66 L341.51 421.04 L341.16 421.42 L340.78 421.81 L340.38 422.19 L339.97 422.57 L339.55 422.96 L339.13 423.34 L338.70 423.72 L338.27 424.11 L337.85 424.49 L337.43 424.87 L337.03 425.26 L336.65 425.64 L336.29 426.03 L335.95 426.41 L335.64 426.79 L335.36 427.18 L335.12 427.56 L334.91 427.94 L334.74 428.33 L334.60 428.71 L334.51 429.09 L334.46 429.48 L334.45 429.86 L334.48 430.24 L334.56 430.63 L334.67 431.01 L334.83 431.39 L335.02 431.78 L335.25 432.16 L335.52 432.54 L335.82 432.93 L336.14 433.31 L336.49 433.69 L336.87 434.08 L337.26 434.46 L337.67 434.84 L338.09 435.23 L338.51 435.61 L338.94 435.99 L339.37 436.38 L339.79 436.76 L340.21 437.14 L340.61 437.53 L341.00 437.91 L341.36 438.30 L341.70 438.68 L342.02 439.06 L342.30 439.45 L342.55 439.83 L342.76 440.21 L342.94 440.60 L343.08 440.98 L343.18 441.36 L343.23 441.75 L343.25 442.13 L343.22 442.51 L343.15 442.90 L343.04 443.28 L342.89 443.66 L342.71 444.05 L342.48 444.43 L342.22 444.81 L341.93 445.20 L341.61 445.58 L341.26 445.96 L340.89 446.35 L340.50 446.73 L340.09 447.11 L339.67 447.50 L339.25 447.88 L338.82 448.26 L338.39 448.65 L337.97 449.03 L337.55 449.42 L337.14 449.80 L336.76 450.18 L336.39 450.57 L336.05 450.95 L335.73 451.33 L335.44 451.72 L335.19 452.10 L334.97 452.48 L334.78 452.87 L334.64 453.25 L334.53 453.63 L334.47 454.02 L334.45 454.40" stroke="#000" stroke-width="6.4" fill="none" stroke-linecap="round"/><path d="M351.20 109.30 L351.22 109.68 L351.28 110.07 L351.39 110.45 L351.53 110.83 L351.72 111.22 L351.94 111.60 L352.19 111.98 L352.48 112.37 L352.80 112.75 L353.14 113.13 L353.51 113.52 L353.89 113.90 L354.30 114.28 L354.72 114.67 L355.14 115.05 L355.57 115.44 L356.00 115.82 L356.42 116.20 L356.84 116.59 L357.25 116.97 L357.64 117.35 L358.01 117.74 L358.36 118.12 L358.68 118.50 L358.97 118.89 L359.23 119.27 L359.46 119.65 L359.64 120.04 L359.79 120.42 L359.90 120.80 L359.97 121.19 L360.00 121.57 L359.98 121.95 L359.93 122.34 L359.83 122.72 L359.69 123.10 L359.51 123.49 L359.30 123.87 L359.05 124.25 L358.77 124.64 L358.45 125.02 L358.11 125.40 L357.75 125.79 L357.36 126.17 L356.96 126.55 L356.54 126.94 L356.12 127.32 L355.69 127.71 L355.26 128.09 L354.84 128.47 L354.42 128.86 L354.01 129.24 L353.62 129.62 L353.24 130.01 L352.89 130.39 L352.57 130.77 L352.27 131.16 L352.00 131.54 L351.77 131.92 L351.58 132.31 L351.42 132.69 L351.31 133.07 L351.23 133.46 L351.20 133.84 L351.21 134.22 L351.26 134.61 L351.35 134.99 L351.49 135.37 L351.66 135.76 L351.87 136.14 L352.11 136.52 L352.39 136.91 L352.70 137.29 L353.04 137.67 L353.40 138.06 L353.78 138.44 L354.18 138.83 L354.60 139.21 L355.02 139.59 L355.45 139.98 L355.88 140.36 L356.30 140.74 L356.72 141.13 L357.13 141.51 L357.53 141.89 L357.91 142.28 L358.26 142.66 L358.59 143.04 L358.89 143.43 L359.16 143.81 L359.40 144.19 L359.59 144.58 L359.76 144.96 L359.88 145.34 L359.96 145.73 L360.00 146.11 L359.99 146.49 L359.95 146.88 L359.86 147.26 L359.73 147.64 L359.57 148.03 L359.36 148.41 L359.12 148.79 L358.85 149.18 L358.54 149.56 L358.21 149.95 L357.85 150.33 L357.47 150.71 L357.08 151.10 L356.66 151.48 L356.24 151.86 L355.81 152.25 L355.39 152.63 L354.96 153.01 L354.54 153.40 L354.12 153.78 L353.73 154.16 L353.35 154.55 L352.99 154.93 L352.66 155.31 L352.35 155.70 L352.08 156.08 L351.84 156.46 L351.63 156.85 L351.47 157.23 L351.34 157.61 L351.25 158.00 L351.21 158.38 L351.20 158.76 L351.24 159.15 L351.32 159.53 L351.44 159.91 L351.61 160.30 L351.80 160.68 L352.04 161.06 L352.31 161.45 L352.61 161.83 L352.94 162.22 L353.29 162.60 L353.67 162.98 L354.07 163.37 L354.48 163.75 L354.90 164.13 L355.32 164.52 L355.75 164.90 L356.18 165.28 L356.60 165.67 L357.02 166.05 L357.42 166.43 L357.80 166.82 L358.16 167.20 L358.50 167.58 L358.81 167.97 L359.09 168.35 L359.33 168.73 L359.54 169.12 L359.71 169.50 L359.85 169.88 L359.94 170.27 L359.99 170.65 L360.00 171.03 L359.97 171.42 L359.89 171.80 L359.78 172.18 L359.62 172.57 L359.43 172.95 L359.20 173.34 L358.93 173.72 L358.63 174.10 L358.31 174.49 L357.96 174.87 L357.58 175.25 L357.19 175.64 L356.78 176.02 L356.36 176.40 L355.94 176.79 L355.51 177.17 L355.08 177.55 L354.66 177.94 L354.24 178.32 L353.84 178.70 L353.45 179.09 L353.09 179.47 L352.75 179.85 L352.43 180.24 L352.15 180.62 L351.90 181.00 L351.69 181.39 L351.51 181.77 L351.37 182.15 L351.27 182.54 L351.22 182.92 L351.20 183.30 L351.23 183.69 L351.30 184.07 L351.41 184.46 L351.56 184.84 L351.74 185.22 L351.97 185.61 L352.23 185.99 L352.52 186.37 L352.84 186.76 L353.19 187.14 L353.56 187.52 L353.95 187.91 L354.36 188.29 L354.78 188.67 L355.20 189.06 L355.63 189.44 L356.06 189.82 L356.48 190.21 L356.90 190.59 L357.31 190.97 L357.69 191.36 L358.06 191.74 L358.40 192.12 L358.72 192.51 L359.01 192.89 L359.26 193.27 L359.48 193.66 L359.67 194.04 L359.81 194.42 L359.92 194.81 L359.98 195.19 L360.00 195.57 L359.98 195.96 L359.92 196.34 L359.81 196.73 L359.67 197.11 L359.48 197.49 L359.26 197.88 L359.01 198.26 L358.72 198.64 L358.40 199.03 L358.06 199.41 L357.69 199.79 L357.31 200.18 L356.90 200.56 L356.48 200.94 L356.06 201.33 L355.63 201.71 L355.20 202.09 L354.78 202.48 L354.36 202.86 L353.95 203.24 L353.56 203.63 L353.19 204.01 L352.84 204.39 L352.52 204.78 L352.23 205.16 L351.97 205.54 L351.74 205.93 L351.56 206.31 L351.41 206.69 L351.30 207.08 L351.23 207.46 L351.20 207.85 L351.22 208.23 L351.27 208.61 L351.37 209.00 L351.51 209.38 L351.69 209.76 L351.90 210.15 L352.15 210.53 L352.43 210.91 L352.75 211.30 L353.09 211.68 L353.45 212.06 L353.84 212.45 L354.24 212.83 L354.66 213.21 L355.08 213.60 L355.51 213.98 L355.94 214.36 L356.36 214.75 L356.78 215.13 L357.19 215.51 L357.58 215.90 L357.96 216.28 L358.31 216.66 L358.63 217.05 L358.93 217.43 L359.20 217.81 L359.43 218.20 L359.62 218.58 L359.78 218.97 L359.89 219.35 L359.97 219.73 L360.00 220.12 L359.99 220.50 L359.94 220.88 L359.85 221.27 L359.71 221.65 L359.54 222.03 L359.33 222.42 L359.09 222.80 L358.81 223.18 L358.50 223.57 L358.16 223.95 L357.80 224.33 L357.42 224.72 L357.02 225.10 L356.60 225.48 L356.18 225.87 L355.75 226.25 L355.32 226.63 L354.90 227.02 L354.48 227.40 L354.07 227.78 L353.67 228.17 L353.29 228.55 L352.94 228.93 L352.61 229.32 L352.31 229.70 L352.04 230.08 L351.80 230.47 L351.61 230.85 L351.44 231.24 L351.32 231.62 L351.24 232.00 L351.20 232.39 L351.21 232.77 L351.25 233.15 L351.34 233.54 L351.47 233.92 L351.63 234.30 L351.84 234.69 L352.08 235.07 L352.35 235.45 L352.66 235.84 L352.99 236.22 L353.35 236.60 L353.73 236.99 L354.12 237.37 L354.54 237.75 L354.96 238.14 L355.39 238.52 L355.81 238.90 L356.24 239.29 L356.66 239.67 L357.08 240.05 L357.47 240.44 L357.85 240.82 L358.21 241.20 L358.54 241.59 L358.85 241.97 L359.12 242.36 L359.36 242.74 L359.57 243.12 L359.73 243.51 L359.86 243.89 L359.95 244.27 L359.99 244.66 L360.00 245.04 L359.96 245.42 L359.88 245.81 L359.76 246.19 L359.59 246.57 L359.40 246.96 L359.16 247.34 L358.89 247.72 L358.59 248.11 L358.26 248.49 L357.91 248.87 L357.53 249.26 L357.13 249.64 L356.72 250.02 L356.30 250.41 L355.88 250.79 L355.45 251.17 L355.02 251.56 L354.60 251.94 L354.18 252.32 L353.78 252.71 L353.40 253.09 L353.04 253.48 L352.70 253.86 L352.39 254.24 L352.11 254.63 L351.87 255.01 L351.66 255.39 L351.49 255.78 L351.35 256.16 L351.26 256.54 L351.21 256.93 L351.20 257.31 L351.23 257.69 L351.31 258.08 L351.42 258.46 L351.58 258.84 L351.77 259.23 L352.00 259.61 L352.27 259.99 L352.57 260.38 L352.89 260.76 L353.24 261.14 L353.62 261.53 L354.01 261.91 L354.42 262.29 L354.84 262.68 L355.26 263.06 L355.69 263.44 L356.12 263.83 L356.54 264.21 L356.96 264.59 L357.36 264.98 L357.75 265.36 L358.11 265.75 L358.45 266.13 L358.77 266.51 L359.05 266.90 L359.30 267.28 L359.51 267.66 L359.69 268.05 L359.83 268.43 L359.93 268.81 L359.98 269.20 L360.00 269.58 L359.97 269.96 L359.90 270.35 L359.79 270.73 L359.64 271.11 L359.46 271.50 L359.23 271.88 L358.97 272.26 L358.68 272.65 L358.36 273.03 L358.01 273.41 L357.64 273.80 L357.25 274.18 L356.84 274.56 L356.42 274.95 L356.00 275.33 L355.57 275.71 L355.14 276.10 L354.72 276.48 L354.30 276.87 L353.89 277.25 L353.51 277.63 L353.14 278.02 L352.80 278.40 L352.48 278.78 L352.19 279.17 L351.94 279.55 L351.72 279.93 L351.53 280.32 L351.39 280.70 L351.28 281.08 L351.22 281.47 L351.20 281.85 L351.22 282.23 L351.28 282.62 L351.39 283.00 L351.53 283.38 L351.72 283.77 L351.94 284.15 L352.19 284.53 L352.48 284.92 L352.80 285.30 L353.14 285.68 L353.51 286.07 L353.89 286.45 L354.30 286.83 L354.72 287.22 L355.14 287.60 L355.57 287.99 L356.00 288.37 L356.42 288.75 L356.84 289.14 L357.25 289.52 L357.64 289.90 L358.01 290.29 L358.36 290.67 L358.68 291.05 L358.97 291.44 L359.23 291.82 L359.46 292.20 L359.64 292.59 L359.79 292.97 L359.90 293.35 L359.97 293.74 L360.00 294.12 L359.98 294.50 L359.93 294.89 L359.83 295.27 L359.69 295.65 L359.51 296.04 L359.30 296.42 L359.05 296.80 L358.77 297.19 L358.45 297.57 L358.11 297.95 L357.75 298.34 L357.36 298.72 L356.96 299.10 L356.54 299.49 L356.12 299.87 L355.69 300.26 L355.26 300.64 L354.84 301.02 L354.42 301.41 L354.01 301.79 L353.62 302.17 L353.24 302.56 L352.89 302.94 L352.57 303.32 L352.27 303.71 L352.00 304.09 L351.77 304.47 L351.58 304.86 L351.42 305.24 L351.31 305.62 L351.23 306.01 L351.20 306.39 L351.21 306.77 L351.26 307.16 L351.35 307.54 L351.49 307.92 L351.66 308.31 L351.87 308.69 L352.11 309.07 L352.39 309.46 L352.70 309.84 L353.04 310.22 L353.40 310.61 L353.78 310.99 L354.18 311.38 L354.60 311.76 L355.02 312.14 L355.45 312.53 L355.88 312.91 L356.30 313.29 L356.72 313.68 L357.13 314.06 L357.53 314.44 L357.91 314.83 L358.26 315.21 L358.59 315.59 L358.89 315.98 L359.16 316.36 L359.40 316.74 L359.59 317.13 L359.76 317.51 L359.88 317.89 L359.96 318.28 L360.00 318.66 L359.99 319.04 L359.95 319.43 L359.86 319.81 L359.73 320.19 L359.57 320.58 L359.36 320.96 L359.12 321.34 L358.85 321.73 L358.54 322.11 L358.21 322.50 L357.85 322.88 L357.47 323.26 L357.08 323.65 L356.66 324.03 L356.24 324.41 L355.81 324.80 L355.39 325.18 L354.96 325.56 L354.54 325.95 L354.12 326.33 L353.73 326.71 L353.35 327.10 L352.99 327.48 L352.66 327.86 L352.35 328.25 L352.08 328.63 L351.84 329.01 L351.63 329.40 L351.47 329.78 L351.34 330.16 L351.25 330.55 L351.21 330.93 L351.20 331.31 L351.24 331.70 L351.32 332.08 L351.44 332.46 L351.61 332.85 L351.80 333.23 L352.04 333.61 L352.31 334.00 L352.61 334.38 L352.94 334.77 L353.29 335.15 L353.67 335.53 L354.07 335.92 L354.48 336.30 L354.90 336.68 L355.32 337.07 L355.75 337.45 L356.18 337.83 L356.60 338.22 L357.02 338.60 L357.42 338.98 L357.80 339.37 L358.16 339.75 L358.50 340.13 L358.81 340.52 L359.09 340.90 L359.33 341.28 L359.54 341.67 L359.71 342.05 L359.85 342.43 L359.94 342.82 L359.99 343.20 L360.00 343.58 L359.97 343.97 L359.89 344.35 L359.78 344.73 L359.62 345.12 L359.43 345.50 L359.20 345.89 L358.93 346.27 L358.63 346.65 L358.31 347.04 L357.96 347.42 L357.58 347.80 L357.19 348.19 L356.78 348.57 L356.36 348.95 L355.94 349.34 L355.51 349.72 L355.08 350.10 L354.66 350.49 L354.24 350.87 L353.84 351.25 L353.45 351.64 L353.09 352.02 L352.75 352.40 L352.43 352.79 L352.15 353.17 L351.90 353.55 L351.69 353.94 L351.51 354.32 L351.37 354.70 L351.27 355.09 L351.22 355.47 L351.20 355.85 L351.23 356.24 L351.30 356.62 L351.41 357.01 L351.56 357.39 L351.74 357.77 L351.97 358.16 L352.23 358.54 L352.52 358.92 L352.84 359.31 L353.19 359.69 L353.56 360.07 L353.95 360.46 L354.36 360.84 L354.78 361.22 L355.20 361.61 L355.63 361.99 L356.06 362.37 L356.48 362.76 L356.90 363.14 L357.31 363.52 L357.69 363.91 L358.06 364.29 L358.40 364.67 L358.72 365.06 L359.01 365.44 L359.26 365.82 L359.48 366.21 L359.67 366.59 L359.81 366.97 L359.92 367.36 L359.98 367.74 L360.00 368.12 L359.98 368.51 L359.92 368.89 L359.81 369.28 L359.67 369.66 L359.48 370.04 L359.26 370.43 L359.01 370.81 L358.72 371.19 L358.40 371.58 L358.06 371.96 L357.69 372.34 L357.31 372.73 L356.90 373.11 L356.48 373.49 L356.06 373.88 L355.63 374.26 L355.20 374.64 L354.78 375.03 L354.36 375.41 L353.95 375.79 L353.56 376.18 L353.19 376.56 L352.84 376.94 L352.52 377.33 L352.23 377.71 L351.97 378.09 L351.74 378.48 L351.56 378.86 L351.41 379.24 L351.30 379.63 L351.23 380.01 L351.20 380.40 L351.22 380.78 L351.27 381.16 L351.37 381.55 L351.51 381.93 L351.69 382.31 L351.90 382.70 L352.15 383.08 L352.43 383.46 L352.75 383.85 L353.09 384.23 L353.45 384.61 L353.84 385.00 L354.24 385.38 L354.66 385.76 L355.08 386.15 L355.51 386.53 L355.94 386.91 L356.36 387.30 L356.78 387.68 L357.19 388.06 L357.58 388.45 L357.96 388.83 L358.31 389.21 L358.63 389.60 L358.93 389.98 L359.20 390.36 L359.43 390.75 L359.62 391.13 L359.78 391.52 L359.89 391.90 L359.97 392.28 L360.00 392.67 L359.99 393.05 L359.94 393.43 L359.85 393.82 L359.71 394.20 L359.54 394.58 L359.33 394.97 L359.09 395.35 L358.81 395.73 L358.50 396.12 L358.16 396.50 L357.80 396.88 L357.42 397.27 L357.02 397.65 L356.60 398.03 L356.18 398.42 L355.75 398.80 L355.32 399.18 L354.90 399.57 L354.48 399.95 L354.07 400.33 L353.67 400.72 L353.29 401.10 L352.94 401.48 L352.61 401.87 L352.31 402.25 L352.04 402.63 L351.80 403.02 L351.61 403.40 L351.44 403.79 L351.32 404.17 L351.24 404.55 L351.20 404.94 L351.21 405.32 L351.25 405.70 L351.34 406.09 L351.47 406.47 L351.63 406.85 L351.84 407.24 L352.08 407.62 L352.35 408.00 L352.66 408.39 L352.99 408.77 L353.35 409.15 L353.73 409.54 L354.12 409.92 L354.54 410.30 L354.96 410.69 L355.39 411.07 L355.81 411.45 L356.24 411.84 L356.66 412.22 L357.08 412.60 L357.47 412.99 L357.85 413.37 L358.21 413.75 L358.54 414.14 L358.85 414.52 L359.12 414.91 L359.36 415.29 L359.57 415.67 L359.73 416.06 L359.86 416.44 L359.95 416.82 L359.99 417.21 L360.00 417.59 L359.96 417.97 L359.88 418.36 L359.76 418.74 L359.59 419.12 L359.40 419.51 L359.16 419.89 L358.89 420.27 L358.59 420.66 L358.26 421.04 L357.91 421.42 L357.53 421.81 L357.13 422.19 L356.72 422.57 L356.30 422.96 L355.88 423.34 L355.45 423.72 L355.02 424.11 L354.60 424.49 L354.18 424.87 L353.78 425.26 L353.40 425.64 L353.04 426.03 L352.70 426.41 L352.39 426.79 L352.11 427.18 L351.87 427.56 L351.66 427.94 L351.49 428.33 L351.35 428.71 L351.26 429.09 L351.21 429.48 L351.20 429.86 L351.23 430.24 L351.31 430.63 L351.42 431.01 L351.58 431.39 L351.77 431.78 L352.00 432.16 L352.27 432.54 L352.57 432.93 L352.89 433.31 L353.24 433.69 L353.62 434.08 L354.01 434.46 L354.42 434.84 L354.84 435.23 L355.26 435.61 L355.69 435.99 L356.12 436.38 L356.54 436.76 L356.96 437.14 L357.36 437.53 L357.75 437.91 L358.11 438.30 L358.45 438.68 L358.77 439.06 L359.05 439.45 L359.30 439.83 L359.51 440.21 L359.69 440.60 L359.83 440.98 L359.93 441.36 L359.98 441.75 L360.00 442.13 L359.97 442.51 L359.90 442.90 L359.79 443.28 L359.64 443.66 L359.46 444.05 L359.23 444.43 L358.97 444.81 L358.68 445.20 L358.36 445.58 L358.01 445.96 L357.64 446.35 L357.25 446.73 L356.84 447.11 L356.42 447.50 L356.00 447.88 L355.57 448.26 L355.14 448.65 L354.72 449.03 L354.30 449.42 L353.89 449.80 L353.51 450.18 L353.14 450.57 L352.80 450.95 L352.48 451.33 L352.19 451.72 L351.94 452.10 L351.72 452.48 L351.53 452.87 L351.39 453.25 L351.28 453.63 L351.22 454.02 L351.20 454.40" stroke="#4d7cf8" stroke-width="7.6000000000000005" fill="none" stroke-linecap="round"/><path d="M351.20 109.30 L351.22 109.68 L351.28 110.07 L351.39 110.45 L351.53 110.83 L351.72 111.22 L351.94 111.60 L352.19 111.98 L352.48 112.37 L352.80 112.75 L353.14 113.13 L353.51 113.52 L353.89 113.90 L354.30 114.28 L354.72 114.67 L355.14 115.05 L355.57 115.44 L356.00 115.82 L356.42 116.20 L356.84 116.59 L357.25 116.97 L357.64 117.35 L358.01 117.74 L358.36 118.12 L358.68 118.50 L358.97 118.89 L359.23 119.27 L359.46 119.65 L359.64 120.04 L359.79 120.42 L359.90 120.80 L359.97 121.19 L360.00 121.57 L359.98 121.95 L359.93 122.34 L359.83 122.72 L359.69 123.10 L359.51 123.49 L359.30 123.87 L359.05 124.25 L358.77 124.64 L358.45 125.02 L358.11 125.40 L357.75 125.79 L357.36 126.17 L356.96 126.55 L356.54 126.94 L356.12 127.32 L355.69 127.71 L355.26 128.09 L354.84 128.47 L354.42 128.86 L354.01 129.24 L353.62 129.62 L353.24 130.01 L352.89 130.39 L352.57 130.77 L352.27 131.16 L352.00 131.54 L351.77 131.92 L351.58 132.31 L351.42 132.69 L351.31 133.07 L351.23 133.46 L351.20 133.84 L351.21 134.22 L351.26 134.61 L351.35 134.99 L351.49 135.37 L351.66 135.76 L351.87 136.14 L352.11 136.52 L352.39 136.91 L352.70 137.29 L353.04 137.67 L353.40 138.06 L353.78 138.44 L354.18 138.83 L354.60 139.21 L355.02 139.59 L355.45 139.98 L355.88 140.36 L356.30 140.74 L356.72 141.13 L357.13 141.51 L357.53 141.89 L357.91 142.28 L358.26 142.66 L358.59 143.04 L358.89 143.43 L359.16 143.81 L359.40 144.19 L359.59 144.58 L359.76 144.96 L359.88 145.34 L359.96 145.73 L360.00 146.11 L359.99 146.49 L359.95 146.88 L359.86 147.26 L359.73 147.64 L359.57 148.03 L359.36 148.41 L359.12 148.79 L358.85 149.18 L358.54 149.56 L358.21 149.95 L357.85 150.33 L357.47 150.71 L357.08 151.10 L356.66 151.48 L356.24 151.86 L355.81 152.25 L355.39 152.63 L354.96 153.01 L354.54 153.40 L354.12 153.78 L353.73 154.16 L353.35 154.55 L352.99 154.93 L352.66 155.31 L352.35 155.70 L352.08 156.08 L351.84 156.46 L351.63 156.85 L351.47 157.23 L351.34 157.61 L351.25 158.00 L351.21 158.38 L351.20 158.76 L351.24 159.15 L351.32 159.53 L351.44 159.91 L351.61 160.30 L351.80 160.68 L352.04 161.06 L352.31 161.45 L352.61 161.83 L352.94 162.22 L353.29 162.60 L353.67 162.98 L354.07 163.37 L354.48 163.75 L354.90 164.13 L355.32 164.52 L355.75 164.90 L356.18 165.28 L356.60 165.67 L357.02 166.05 L357.42 166.43 L357.80 166.82 L358.16 167.20 L358.50 167.58 L358.81 167.97 L359.09 168.35 L359.33 168.73 L359.54 169.12 L359.71 169.50 L359.85 169.88 L359.94 170.27 L359.99 170.65 L360.00 171.03 L359.97 171.42 L359.89 171.80 L359.78 172.18 L359.62 172.57 L359.43 172.95 L359.20 173.34 L358.93 173.72 L358.63 174.10 L358.31 174.49 L357.96 174.87 L357.58 175.25 L357.19 175.64 L356.78 176.02 L356.36 176.40 L355.94 176.79 L355.51 177.17 L355.08 177.55 L354.66 177.94 L354.24 178.32 L353.84 178.70 L353.45 179.09 L353.09 179.47 L352.75 179.85 L352.43 180.24 L352.15 180.62 L351.90 181.00 L351.69 181.39 L351.51 181.77 L351.37 182.15 L351.27 182.54 L351.22 182.92 L351.20 183.30 L351.23 183.69 L351.30 184.07 L351.41 184.46 L351.56 184.84 L351.74 185.22 L351.97 185.61 L352.23 185.99 L352.52 186.37 L352.84 186.76 L353.19 187.14 L353.56 187.52 L353.95 187.91 L354.36 188.29 L354.78 188.67 L355.20 189.06 L355.63 189.44 L356.06 189.82 L356.48 190.21 L356.90 190.59 L357.31 190.97 L357.69 191.36 L358.06 191.74 L358.40 192.12 L358.72 192.51 L359.01 192.89 L359.26 193.27 L359.48 193.66 L359.67 194.04 L359.81 194.42 L359.92 194.81 L359.98 195.19 L360.00 195.57 L359.98 195.96 L359.92 196.34 L359.81 196.73 L359.67 197.11 L359.48 197.49 L359.26 197.88 L359.01 198.26 L358.72 198.64 L358.40 199.03 L358.06 199.41 L357.69 199.79 L357.31 200.18 L356.90 200.56 L356.48 200.94 L356.06 201.33 L355.63 201.71 L355.20 202.09 L354.78 202.48 L354.36 202.86 L353.95 203.24 L353.56 203.63 L353.19 204.01 L352.84 204.39 L352.52 204.78 L352.23 205.16 L351.97 205.54 L351.74 205.93 L351.56 206.31 L351.41 206.69 L351.30 207.08 L351.23 207.46 L351.20 207.85 L351.22 208.23 L351.27 208.61 L351.37 209.00 L351.51 209.38 L351.69 209.76 L351.90 210.15 L352.15 210.53 L352.43 210.91 L352.75 211.30 L353.09 211.68 L353.45 212.06 L353.84 212.45 L354.24 212.83 L354.66 213.21 L355.08 213.60 L355.51 213.98 L355.94 214.36 L356.36 214.75 L356.78 215.13 L357.19 215.51 L357.58 215.90 L357.96 216.28 L358.31 216.66 L358.63 217.05 L358.93 217.43 L359.20 217.81 L359.43 218.20 L359.62 218.58 L359.78 218.97 L359.89 219.35 L359.97 219.73 L360.00 220.12 L359.99 220.50 L359.94 220.88 L359.85 221.27 L359.71 221.65 L359.54 222.03 L359.33 222.42 L359.09 222.80 L358.81 223.18 L358.50 223.57 L358.16 223.95 L357.80 224.33 L357.42 224.72 L357.02 225.10 L356.60 225.48 L356.18 225.87 L355.75 226.25 L355.32 226.63 L354.90 227.02 L354.48 227.40 L354.07 227.78 L353.67 228.17 L353.29 228.55 L352.94 228.93 L352.61 229.32 L352.31 229.70 L352.04 230.08 L351.80 230.47 L351.61 230.85 L351.44 231.24 L351.32 231.62 L351.24 232.00 L351.20 232.39 L351.21 232.77 L351.25 233.15 L351.34 233.54 L351.47 233.92 L351.63 234.30 L351.84 234.69 L352.08 235.07 L352.35 235.45 L352.66 235.84 L352.99 236.22 L353.35 236.60 L353.73 236.99 L354.12 237.37 L354.54 237.75 L354.96 238.14 L355.39 238.52 L355.81 238.90 L356.24 239.29 L356.66 239.67 L357.08 240.05 L357.47 240.44 L357.85 240.82 L358.21 241.20 L358.54 241.59 L358.85 241.97 L359.12 242.36 L359.36 242.74 L359.57 243.12 L359.73 243.51 L359.86 243.89 L359.95 244.27 L359.99 244.66 L360.00 245.04 L359.96 245.42 L359.88 245.81 L359.76 246.19 L359.59 246.57 L359.40 246.96 L359.16 247.34 L358.89 247.72 L358.59 248.11 L358.26 248.49 L357.91 248.87 L357.53 249.26 L357.13 249.64 L356.72 250.02 L356.30 250.41 L355.88 250.79 L355.45 251.17 L355.02 251.56 L354.60 251.94 L354.18 252.32 L353.78 252.71 L353.40 253.09 L353.04 253.48 L352.70 253.86 L352.39 254.24 L352.11 254.63 L351.87 255.01 L351.66 255.39 L351.49 255.78 L351.35 256.16 L351.26 256.54 L351.21 256.93 L351.20 257.31 L351.23 257.69 L351.31 258.08 L351.42 258.46 L351.58 258.84 L351.77 259.23 L352.00 259.61 L352.27 259.99 L352.57 260.38 L352.89 260.76 L353.24 261.14 L353.62 261.53 L354.01 261.91 L354.42 262.29 L354.84 262.68 L355.26 263.06 L355.69 263.44 L356.12 263.83 L356.54 264.21 L356.96 264.59 L357.36 264.98 L357.75 265.36 L358.11 265.75 L358.45 266.13 L358.77 266.51 L359.05 266.90 L359.30 267.28 L359.51 267.66 L359.69 268.05 L359.83 268.43 L359.93 268.81 L359.98 269.20 L360.00 269.58 L359.97 269.96 L359.90 270.35 L359.79 270.73 L359.64 271.11 L359.46 271.50 L359.23 271.88 L358.97 272.26 L358.68 272.65 L358.36 273.03 L358.01 273.41 L357.64 273.80 L357.25 274.18 L356.84 274.56 L356.42 274.95 L356.00 275.33 L355.57 275.71 L355.14 276.10 L354.72 276.48 L354.30 276.87 L353.89 277.25 L353.51 277.63 L353.14 278.02 L352.80 278.40 L352.48 278.78 L352.19 279.17 L351.94 279.55 L351.72 279.93 L351.53 280.32 L351.39 280.70 L351.28 281.08 L351.22 281.47 L351.20 281.85 L351.22 282.23 L351.28 282.62 L351.39 283.00 L351.53 283.38 L351.72 283.77 L351.94 284.15 L352.19 284.53 L352.48 284.92 L352.80 285.30 L353.14 285.68 L353.51 286.07 L353.89 286.45 L354.30 286.83 L354.72 287.22 L355.14 287.60 L355.57 287.99 L356.00 288.37 L356.42 288.75 L356.84 289.14 L357.25 289.52 L357.64 289.90 L358.01 290.29 L358.36 290.67 L358.68 291.05 L358.97 291.44 L359.23 291.82 L359.46 292.20 L359.64 292.59 L359.79 292.97 L359.90 293.35 L359.97 293.74 L360.00 294.12 L359.98 294.50 L359.93 294.89 L359.83 295.27 L359.69 295.65 L359.51 296.04 L359.30 296.42 L359.05 296.80 L358.77 297.19 L358.45 297.57 L358.11 297.95 L357.75 298.34 L357.36 298.72 L356.96 299.10 L356.54 299.49 L356.12 299.87 L355.69 300.26 L355.26 300.64 L354.84 301.02 L354.42 301.41 L354.01 301.79 L353.62 302.17 L353.24 302.56 L352.89 302.94 L352.57 303.32 L352.27 303.71 L352.00 304.09 L351.77 304.47 L351.58 304.86 L351.42 305.24 L351.31 305.62 L351.23 306.01 L351.20 306.39 L351.21 306.77 L351.26 307.16 L351.35 307.54 L351.49 307.92 L351.66 308.31 L351.87 308.69 L352.11 309.07 L352.39 309.46 L352.70 309.84 L353.04 310.22 L353.40 310.61 L353.78 310.99 L354.18 311.38 L354.60 311.76 L355.02 312.14 L355.45 312.53 L355.88 312.91 L356.30 313.29 L356.72 313.68 L357.13 314.06 L357.53 314.44 L357.91 314.83 L358.26 315.21 L358.59 315.59 L358.89 315.98 L359.16 316.36 L359.40 316.74 L359.59 317.13 L359.76 317.51 L359.88 317.89 L359.96 318.28 L360.00 318.66 L359.99 319.04 L359.95 319.43 L359.86 319.81 L359.73 320.19 L359.57 320.58 L359.36 320.96 L359.12 321.34 L358.85 321.73 L358.54 322.11 L358.21 322.50 L357.85 322.88 L357.47 323.26 L357.08 323.65 L356.66 324.03 L356.24 324.41 L355.81 324.80 L355.39 325.18 L354.96 325.56 L354.54 325.95 L354.12 326.33 L353.73 326.71 L353.35 327.10 L352.99 327.48 L352.66 327.86 L352.35 328.25 L352.08 328.63 L351.84 329.01 L351.63 329.40 L351.47 329.78 L351.34 330.16 L351.25 330.55 L351.21 330.93 L351.20 331.31 L351.24 331.70 L351.32 332.08 L351.44 332.46 L351.61 332.85 L351.80 333.23 L352.04 333.61 L352.31 334.00 L352.61 334.38 L352.94 334.77 L353.29 335.15 L353.67 335.53 L354.07 335.92 L354.48 336.30 L354.90 336.68 L355.32 337.07 L355.75 337.45 L356.18 337.83 L356.60 338.22 L357.02 338.60 L357.42 338.98 L357.80 339.37 L358.16 339.75 L358.50 340.13 L358.81 340.52 L359.09 340.90 L359.33 341.28 L359.54 341.67 L359.71 342.05 L359.85 342.43 L359.94 342.82 L359.99 343.20 L360.00 343.58 L359.97 343.97 L359.89 344.35 L359.78 344.73 L359.62 345.12 L359.43 345.50 L359.20 345.89 L358.93 346.27 L358.63 346.65 L358.31 347.04 L357.96 347.42 L357.58 347.80 L357.19 348.19 L356.78 348.57 L356.36 348.95 L355.94 349.34 L355.51 349.72 L355.08 350.10 L354.66 350.49 L354.24 350.87 L353.84 351.25 L353.45 351.64 L353.09 352.02 L352.75 352.40 L352.43 352.79 L352.15 353.17 L351.90 353.55 L351.69 353.94 L351.51 354.32 L351.37 354.70 L351.27 355.09 L351.22 355.47 L351.20 355.85 L351.23 356.24 L351.30 356.62 L351.41 357.01 L351.56 357.39 L351.74 357.77 L351.97 358.16 L352.23 358.54 L352.52 358.92 L352.84 359.31 L353.19 359.69 L353.56 360.07 L353.95 360.46 L354.36 360.84 L354.78 361.22 L355.20 361.61 L355.63 361.99 L356.06 362.37 L356.48 362.76 L356.90 363.14 L357.31 363.52 L357.69 363.91 L358.06 364.29 L358.40 364.67 L358.72 365.06 L359.01 365.44 L359.26 365.82 L359.48 366.21 L359.67 366.59 L359.81 366.97 L359.92 367.36 L359.98 367.74 L360.00 368.12 L359.98 368.51 L359.92 368.89 L359.81 369.28 L359.67 369.66 L359.48 370.04 L359.26 370.43 L359.01 370.81 L358.72 371.19 L358.40 371.58 L358.06 371.96 L357.69 372.34 L357.31 372.73 L356.90 373.11 L356.48 373.49 L356.06 373.88 L355.63 374.26 L355.20 374.64 L354.78 375.03 L354.36 375.41 L353.95 375.79 L353.56 376.18 L353.19 376.56 L352.84 376.94 L352.52 377.33 L352.23 377.71 L351.97 378.09 L351.74 378.48 L351.56 378.86 L351.41 379.24 L351.30 379.63 L351.23 380.01 L351.20 380.40 L351.22 380.78 L351.27 381.16 L351.37 381.55 L351.51 381.93 L351.69 382.31 L351.90 382.70 L352.15 383.08 L352.43 383.46 L352.75 383.85 L353.09 384.23 L353.45 384.61 L353.84 385.00 L354.24 385.38 L354.66 385.76 L355.08 386.15 L355.51 386.53 L355.94 386.91 L356.36 387.30 L356.78 387.68 L357.19 388.06 L357.58 388.45 L357.96 388.83 L358.31 389.21 L358.63 389.60 L358.93 389.98 L359.20 390.36 L359.43 390.75 L359.62 391.13 L359.78 391.52 L359.89 391.90 L359.97 392.28 L360.00 392.67 L359.99 393.05 L359.94 393.43 L359.85 393.82 L359.71 394.20 L359.54 394.58 L359.33 394.97 L359.09 395.35 L358.81 395.73 L358.50 396.12 L358.16 396.50 L357.80 396.88 L357.42 397.27 L357.02 397.65 L356.60 398.03 L356.18 398.42 L355.75 398.80 L355.32 399.18 L354.90 399.57 L354.48 399.95 L354.07 400.33 L353.67 400.72 L353.29 401.10 L352.94 401.48 L352.61 401.87 L352.31 402.25 L352.04 402.63 L351.80 403.02 L351.61 403.40 L351.44 403.79 L351.32 404.17 L351.24 404.55 L351.20 404.94 L351.21 405.32 L351.25 405.70 L351.34 406.09 L351.47 406.47 L351.63 406.85 L351.84 407.24 L352.08 407.62 L352.35 408.00 L352.66 408.39 L352.99 408.77 L353.35 409.15 L353.73 409.54 L354.12 409.92 L354.54 410.30 L354.96 410.69 L355.39 411.07 L355.81 411.45 L356.24 411.84 L356.66 412.22 L357.08 412.60 L357.47 412.99 L357.85 413.37 L358.21 413.75 L358.54 414.14 L358.85 414.52 L359.12 414.91 L359.36 415.29 L359.57 415.67 L359.73 416.06 L359.86 416.44 L359.95 416.82 L359.99 417.21 L360.00 417.59 L359.96 417.97 L359.88 418.36 L359.76 418.74 L359.59 419.12 L359.40 419.51 L359.16 419.89 L358.89 420.27 L358.59 420.66 L358.26 421.04 L357.91 421.42 L357.53 421.81 L357.13 422.19 L356.72 422.57 L356.30 422.96 L355.88 423.34 L355.45 423.72 L355.02 424.11 L354.60 424.49 L354.18 424.87 L353.78 425.26 L353.40 425.64 L353.04 426.03 L352.70 426.41 L352.39 426.79 L352.11 427.18 L351.87 427.56 L351.66 427.94 L351.49 428.33 L351.35 428.71 L351.26 429.09 L351.21 429.48 L351.20 429.86 L351.23 430.24 L351.31 430.63 L351.42 431.01 L351.58 431.39 L351.77 431.78 L352.00 432.16 L352.27 432.54 L352.57 432.93 L352.89 433.31 L353.24 433.69 L353.62 434.08 L354.01 434.46 L354.42 434.84 L354.84 435.23 L355.26 435.61 L355.69 435.99 L356.12 436.38 L356.54 436.76 L356.96 437.14 L357.36 437.53 L357.75 437.91 L358.11 438.30 L358.45 438.68 L358.77 439.06 L359.05 439.45 L359.30 439.83 L359.51 440.21 L359.69 440.60 L359.83 440.98 L359.93 441.36 L359.98 441.75 L360.00 442.13 L359.97 442.51 L359.90 442.90 L359.79 443.28 L359.64 443.66 L359.46 444.05 L359.23 444.43 L358.97 444.81 L358.68 445.20 L358.36 445.58 L358.01 445.96 L357.64 446.35 L357.25 446.73 L356.84 447.11 L356.42 447.50 L356.00 447.88 L355.57 448.26 L355.14 448.65 L354.72 449.03 L354.30 449.42 L353.89 449.80 L353.51 450.18 L353.14 450.57 L352.80 450.95 L352.48 451.33 L352.19 451.72 L351.94 452.10 L351.72 452.48 L351.53 452.87 L351.39 453.25 L351.28 453.63 L351.22 454.02 L351.20 454.40" stroke="#000" stroke-width="6.4" fill="none" stroke-linecap="round"/><g fill="#4d7cf8"><rect x="328.9" y="108.0" width="2.7" height="2.7"/><rect x="336.6" y="108.0" width="2.7" height="2.7"/><rect x="340.2" y="111.2" width="2.7" height="2.7"/><rect x="346.1" y="120.3" width="2.7" height="2.7"/><rect x="338.4" y="120.3" width="2.7" height="2.7"/><rect x="334.8" y="117.1" width="2.7" height="2.7"/><rect x="334.8" y="123.5" width="2.7" height="2.7"/><rect x="328.9" y="132.6" width="2.7" height="2.7"/><rect x="336.6" y="132.6" width="2.7" height="2.7"/><rect x="340.2" y="129.4" width="2.7" height="2.7"/><rect x="340.2" y="135.8" width="2.7" height="2.7"/><rect x="346.1" y="144.9" width="2.7" height="2.7"/><rect x="338.4" y="144.9" width="2.7" height="2.7"/><rect x="334.8" y="141.7" width="2.7" height="2.7"/><rect x="334.8" y="148.1" width="2.7" height="2.7"/><rect x="328.9" y="157.2" width="2.7" height="2.7"/><rect x="336.6" y="157.2" width="2.7" height="2.7"/><rect x="340.2" y="154.1" width="2.7" height="2.7"/><rect x="340.2" y="160.4" width="2.7" height="2.7"/><rect x="346.1" y="169.6" width="2.7" height="2.7"/><rect x="338.4" y="169.6" width="2.7" height="2.7"/><rect x="334.8" y="166.4" width="2.7" height="2.7"/><rect x="334.8" y="172.8" width="2.7" height="2.7"/><rect x="328.9" y="181.9" width="2.7" height="2.7"/><rect x="336.6" y="181.9" width="2.7" height="2.7"/><rect x="340.2" y="178.7" width="2.7" height="2.7"/><rect x="340.2" y="185.1" width="2.7" height="2.7"/><rect x="346.1" y="194.2" width="2.7" height="2.7"/><rect x="338.4" y="194.2" width="2.7" height="2.7"/><rect x="334.8" y="191.0" width="2.7" height="2.7"/><rect x="334.8" y="197.4" width="2.7" height="2.7"/><rect x="328.9" y="206.5" width="2.7" height="2.7"/><rect x="336.6" y="206.5" width="2.7" height="2.7"/><rect x="340.2" y="203.3" width="2.7" height="2.7"/><rect x="340.2" y="209.7" width="2.7" height="2.7"/><rect x="346.1" y="218.9" width="2.7" height="2.7"/><rect x="338.4" y="218.9" width="2.7" height="2.7"/><rect x="334.8" y="215.7" width="2.7" height="2.7"/><rect x="334.8" y="222.1" width="2.7" height="2.7"/><rect x="328.9" y="231.2" width="2.7" height="2.7"/><rect x="336.6" y="231.2" width="2.7" height="2.7"/><rect x="340.2" y="228.0" width="2.7" height="2.7"/><rect x="340.2" y="234.4" width="2.7" height="2.7"/><rect x="346.1" y="243.5" width="2.7" height="2.7"/><rect x="338.4" y="243.5" width="2.7" height="2.7"/><rect x="334.8" y="240.3" width="2.7" height="2.7"/><rect x="334.8" y="246.7" width="2.7" height="2.7"/><rect x="328.9" y="255.8" width="2.7" height="2.7"/><rect x="336.6" y="255.8" width="2.7" height="2.7"/><rect x="340.2" y="252.7" width="2.7" height="2.7"/><rect x="340.2" y="259.0" width="2.7" height="2.7"/><rect x="346.1" y="268.2" width="2.7" height="2.7"/><rect x="338.4" y="268.2" width="2.7" height="2.7"/><rect x="334.8" y="265.0" width="2.7" height="2.7"/><rect x="334.8" y="271.4" width="2.7" height="2.7"/><rect x="328.9" y="280.5" width="2.7" height="2.7"/><rect x="336.6" y="280.5" width="2.7" height="2.7"/><rect x="340.2" y="277.3" width="2.7" height="2.7"/><rect x="340.2" y="283.7" width="2.7" height="2.7"/><rect x="346.1" y="292.8" width="2.7" height="2.7"/><rect x="338.4" y="292.8" width="2.7" height="2.7"/><rect x="334.8" y="289.6" width="2.7" height="2.7"/><rect x="334.8" y="296.0" width="2.7" height="2.7"/><rect x="328.9" y="305.1" width="2.7" height="2.7"/><rect x="336.6" y="305.1" width="2.7" height="2.7"/><rect x="340.2" y="301.9" width="2.7" height="2.7"/><rect x="340.2" y="308.3" width="2.7" height="2.7"/><rect x="346.1" y="317.5" width="2.7" height="2.7"/><rect x="338.4" y="317.5" width="2.7" height="2.7"/><rect x="334.8" y="314.3" width="2.7" height="2.7"/><rect x="334.8" y="320.7" width="2.7" height="2.7"/><rect x="328.9" y="329.8" width="2.7" height="2.7"/><rect x="336.6" y="329.8" width="2.7" height="2.7"/><rect x="340.2" y="326.6" width="2.7" height="2.7"/><rect x="340.2" y="333.0" width="2.7" height="2.7"/><rect x="346.1" y="342.1" width="2.7" height="2.7"/><rect x="338.4" y="342.1" width="2.7" height="2.7"/><rect x="334.8" y="338.9" width="2.7" height="2.7"/><rect x="334.8" y="345.3" width="2.7" height="2.7"/><rect x="328.9" y="354.4" width="2.7" height="2.7"/><rect x="336.6" y="354.4" width="2.7" height="2.7"/><rect x="340.2" y="351.2" width="2.7" height="2.7"/><rect x="340.2" y="357.6" width="2.7" height="2.7"/><rect x="346.1" y="366.8" width="2.7" height="2.7"/><rect x="338.4" y="366.8" width="2.7" height="2.7"/><rect x="334.8" y="363.6" width="2.7" height="2.7"/><rect x="334.8" y="370.0" width="2.7" height="2.7"/><rect x="328.9" y="379.1" width="2.7" height="2.7"/><rect x="336.6" y="379.1" width="2.7" height="2.7"/><rect x="340.2" y="375.9" width="2.7" height="2.7"/><rect x="340.2" y="382.3" width="2.7" height="2.7"/><rect x="346.1" y="391.4" width="2.7" height="2.7"/><rect x="338.4" y="391.4" width="2.7" height="2.7"/><rect x="334.8" y="388.2" width="2.7" height="2.7"/><rect x="334.8" y="394.6" width="2.7" height="2.7"/><rect x="328.9" y="403.7" width="2.7" height="2.7"/><rect x="336.6" y="403.7" width="2.7" height="2.7"/><rect x="340.2" y="400.5" width="2.7" height="2.7"/><rect x="340.2" y="406.9" width="2.7" height="2.7"/><rect x="346.1" y="416.1" width="2.7" height="2.7"/><rect x="338.4" y="416.1" width="2.7" height="2.7"/><rect x="334.8" y="412.9" width="2.7" height="2.7"/><rect x="334.8" y="419.3" width="2.7" height="2.7"/><rect x="328.9" y="428.4" width="2.7" height="2.7"/><rect x="336.6" y="428.4" width="2.7" height="2.7"/><rect x="340.2" y="425.2" width="2.7" height="2.7"/><rect x="340.2" y="431.6" width="2.7" height="2.7"/><rect x="346.1" y="440.7" width="2.7" height="2.7"/><rect x="338.4" y="440.7" width="2.7" height="2.7"/><rect x="334.8" y="437.5" width="2.7" height="2.7"/><rect x="334.8" y="443.9" width="2.7" height="2.7"/><rect x="328.9" y="453.0" width="2.7" height="2.7"/><rect x="336.6" y="453.0" width="2.7" height="2.7"/><rect x="340.2" y="449.8" width="2.7" height="2.7"/><rect x="340.2" y="456.2" width="2.7" height="2.7"/><rect x="333.1" y="104.4" width="2.7" height="2.7"/><rect x="333.1" y="456.6" width="2.7" height="2.7"/><rect x="345.7" y="108.0" width="2.7" height="2.7"/><rect x="353.4" y="108.0" width="2.7" height="2.7"/><rect x="356.9" y="111.2" width="2.7" height="2.7"/><rect x="362.8" y="120.3" width="2.7" height="2.7"/><rect x="355.1" y="120.3" width="2.7" height="2.7"/><rect x="351.6" y="117.1" width="2.7" height="2.7"/><rect x="351.6" y="123.5" width="2.7" height="2.7"/><rect x="345.7" y="132.6" width="2.7" height="2.7"/><rect x="353.4" y="132.6" width="2.7" height="2.7"/><rect x="356.9" y="129.4" width="2.7" height="2.7"/><rect x="356.9" y="135.8" width="2.7" height="2.7"/><rect x="362.8" y="144.9" width="2.7" height="2.7"/><rect x="355.1" y="144.9" width="2.7" height="2.7"/><rect x="351.6" y="141.7" width="2.7" height="2.7"/><rect x="351.6" y="148.1" width="2.7" height="2.7"/><rect x="345.7" y="157.2" width="2.7" height="2.7"/><rect x="353.4" y="157.2" width="2.7" height="2.7"/><rect x="356.9" y="154.1" width="2.7" height="2.7"/><rect x="356.9" y="160.4" width="2.7" height="2.7"/><rect x="362.8" y="169.6" width="2.7" height="2.7"/><rect x="355.1" y="169.6" width="2.7" height="2.7"/><rect x="351.6" y="166.4" width="2.7" height="2.7"/><rect x="351.6" y="172.8" width="2.7" height="2.7"/><rect x="345.7" y="181.9" width="2.7" height="2.7"/><rect x="353.4" y="181.9" width="2.7" height="2.7"/><rect x="356.9" y="178.7" width="2.7" height="2.7"/><rect x="356.9" y="185.1" width="2.7" height="2.7"/><rect x="362.8" y="194.2" width="2.7" height="2.7"/><rect x="355.1" y="194.2" width="2.7" height="2.7"/><rect x="351.6" y="191.0" width="2.7" height="2.7"/><rect x="351.6" y="197.4" width="2.7" height="2.7"/><rect x="345.7" y="206.5" width="2.7" height="2.7"/><rect x="353.4" y="206.5" width="2.7" height="2.7"/><rect x="356.9" y="203.3" width="2.7" height="2.7"/><rect x="356.9" y="209.7" width="2.7" height="2.7"/><rect x="362.8" y="218.9" width="2.7" height="2.7"/><rect x="355.1" y="218.9" width="2.7" height="2.7"/><rect x="351.6" y="215.7" width="2.7" height="2.7"/><rect x="351.6" y="222.1" width="2.7" height="2.7"/><rect x="345.7" y="231.2" width="2.7" height="2.7"/><rect x="353.4" y="231.2" width="2.7" height="2.7"/><rect x="356.9" y="228.0" width="2.7" height="2.7"/><rect x="356.9" y="234.4" width="2.7" height="2.7"/><rect x="362.8" y="243.5" width="2.7" height="2.7"/><rect x="355.1" y="243.5" width="2.7" height="2.7"/><rect x="351.6" y="240.3" width="2.7" height="2.7"/><rect x="351.6" y="246.7" width="2.7" height="2.7"/><rect x="345.7" y="255.8" width="2.7" height="2.7"/><rect x="353.4" y="255.8" width="2.7" height="2.7"/><rect x="356.9" y="252.7" width="2.7" height="2.7"/><rect x="356.9" y="259.0" width="2.7" height="2.7"/><rect x="362.8" y="268.2" width="2.7" height="2.7"/><rect x="355.1" y="268.2" width="2.7" height="2.7"/><rect x="351.6" y="265.0" width="2.7" height="2.7"/><rect x="351.6" y="271.4" width="2.7" height="2.7"/><rect x="345.7" y="280.5" width="2.7" height="2.7"/><rect x="353.4" y="280.5" width="2.7" height="2.7"/><rect x="356.9" y="277.3" width="2.7" height="2.7"/><rect x="356.9" y="283.7" width="2.7" height="2.7"/><rect x="362.8" y="292.8" width="2.7" height="2.7"/><rect x="355.1" y="292.8" width="2.7" height="2.7"/><rect x="351.6" y="289.6" width="2.7" height="2.7"/><rect x="351.6" y="296.0" width="2.7" height="2.7"/><rect x="345.7" y="305.1" width="2.7" height="2.7"/><rect x="353.4" y="305.1" width="2.7" height="2.7"/><rect x="356.9" y="301.9" width="2.7" height="2.7"/><rect x="356.9" y="308.3" width="2.7" height="2.7"/><rect x="362.8" y="317.5" width="2.7" height="2.7"/><rect x="355.1" y="317.5" width="2.7" height="2.7"/><rect x="351.6" y="314.3" width="2.7" height="2.7"/><rect x="351.6" y="320.7" width="2.7" height="2.7"/><rect x="345.7" y="329.8" width="2.7" height="2.7"/><rect x="353.4" y="329.8" width="2.7" height="2.7"/><rect x="356.9" y="326.6" width="2.7" height="2.7"/><rect x="356.9" y="333.0" width="2.7" height="2.7"/><rect x="362.8" y="342.1" width="2.7" height="2.7"/><rect x="355.1" y="342.1" width="2.7" height="2.7"/><rect x="351.6" y="338.9" width="2.7" height="2.7"/><rect x="351.6" y="345.3" width="2.7" height="2.7"/><rect x="345.7" y="354.4" width="2.7" height="2.7"/><rect x="353.4" y="354.4" width="2.7" height="2.7"/><rect x="356.9" y="351.2" width="2.7" height="2.7"/><rect x="356.9" y="357.6" width="2.7" height="2.7"/><rect x="362.8" y="366.8" width="2.7" height="2.7"/><rect x="355.1" y="366.8" width="2.7" height="2.7"/><rect x="351.6" y="363.6" width="2.7" height="2.7"/><rect x="351.6" y="370.0" width="2.7" height="2.7"/><rect x="345.7" y="379.1" width="2.7" height="2.7"/><rect x="353.4" y="379.1" width="2.7" height="2.7"/><rect x="356.9" y="375.9" width="2.7" height="2.7"/><rect x="356.9" y="382.3" width="2.7" height="2.7"/><rect x="362.8" y="391.4" width="2.7" height="2.7"/><rect x="355.1" y="391.4" width="2.7" height="2.7"/><rect x="351.6" y="388.2" width="2.7" height="2.7"/><rect x="351.6" y="394.6" width="2.7" height="2.7"/><rect x="345.7" y="403.7" width="2.7" height="2.7"/><rect x="353.4" y="403.7" width="2.7" height="2.7"/><rect x="356.9" y="400.5" width="2.7" height="2.7"/><rect x="356.9" y="406.9" width="2.7" height="2.7"/><rect x="362.8" y="416.1" width="2.7" height="2.7"/><rect x="355.1" y="416.1" width="2.7" height="2.7"/><rect x="351.6" y="412.9" width="2.7" height="2.7"/><rect x="351.6" y="419.3" width="2.7" height="2.7"/><rect x="345.7" y="428.4" width="2.7" height="2.7"/><rect x="353.4" y="428.4" width="2.7" height="2.7"/><rect x="356.9" y="425.2" width="2.7" height="2.7"/><rect x="356.9" y="431.6" width="2.7" height="2.7"/><rect x="362.8" y="440.7" width="2.7" height="2.7"/><rect x="355.1" y="440.7" width="2.7" height="2.7"/><rect x="351.6" y="437.5" width="2.7" height="2.7"/><rect x="351.6" y="443.9" width="2.7" height="2.7"/><rect x="345.7" y="453.0" width="2.7" height="2.7"/><rect x="353.4" y="453.0" width="2.7" height="2.7"/><rect x="356.9" y="449.8" width="2.7" height="2.7"/><rect x="356.9" y="456.2" width="2.7" height="2.7"/><rect x="349.9" y="104.4" width="2.7" height="2.7"/><rect x="349.9" y="456.6" width="2.7" height="2.7"/></g></svg><div class="t" style="left:286.7px;top:473.85px;font-size:7.5px;color:#111;font-weight:bold;transform:scaleX(1.0787);">/ 100</div><svg style="left:320px;top:465px;" width="50" height="20" viewBox="0 0 50 20"><rect x="7.4" y="4.4" width="36.1" height="10.6" rx="1.5" fill="#111"/><path d="M6.5 8 L8.5 10 L6.5 12" stroke="#555" stroke-width=".8" fill="none"/></svg><div class="t" style="left:329px;top:472.25px;font-size:7.5px;color:#fff;font-weight:normal;transform:scaleX(0.9638);">RISOTTO</div><svg style="left:0px;top:0px;" width="900" height="562" viewBox="0 0 900 562"><rect x="458" y="70" width="170" height="246" fill="#4a4a4a"/><rect x="458" y="70" width="170" height="2" fill="#333"/><rect x="458" y="72" width="170" height="20" fill="#434343"/><rect x="458" y="72" width="46" height="20" fill="#535353"/><rect x="458" y="92" width="170" height="218" fill="#535353"/><rect x="458" y="309.5" width="170" height="6" fill="#464646"/><rect x="458" y="315" width="170" height="1" fill="#333"/><rect x="458" y="70" width="1" height="246" fill="#333"/><rect x="627" y="70" width="1" height="246" fill="#333"/><rect x="530" y="311.5" width="20" height="1.5" fill="#3a3a3a"/><path d="M598.5 80.5 L601 83 L598.5 85.5 M602.5 80.5 L605 83 L602.5 85.5" stroke="#ddd" stroke-width="1" fill="none"/><rect x="610.5" y="79" width="1" height="8" fill="#888"/><rect x="616" y="80" width="7" height="6" fill="#8c8c8c"/><rect x="469.8" y="104" width="12.5" height="12.7" fill="#fff"/><rect x="472.5" y="106.7" width="7" height="7" fill="#444"/><path d="M470.3 116.2 L481.8 104.5" stroke="#ee1c24" stroke-width="1.3"/><rect x="463" y="96.2" width="13.6" height="13.6" fill="#ccc"/><rect x="464" y="97.2" width="11.6" height="11.6" fill="#000"/><rect x="590" y="96" width="15" height="16" fill="#4a4a4a"/><rect x="607" y="96" width="17" height="16" fill="#4a4a4a"/><g fill="#d0d0d0"><rect x="593" y="99" width="10" height="1.5"/><rect x="593" y="102" width="10" height="1.5"/><rect x="593" y="105" width="10" height="1.5"/><rect x="593" y="108" width="10" height="1.5"/></g><g fill="#d0d0d0"><rect x="610.5" y="98.5" width="3" height="3"/><rect x="614.3" y="98.5" width="3" height="3"/><rect x="618.1" y="98.5" width="3" height="3"/><rect x="610.5" y="102.3" width="3" height="3"/><rect x="614.3" y="102.3" width="3" height="3"/><rect x="618.1" y="102.3" width="3" height="3"/><rect x="610.5" y="106.1" width="3" height="3"/><rect x="614.3" y="106.1" width="3" height="3"/><rect x="618.1" y="106.1" width="3" height="3"/></g><rect x="460.5" y="119.5" width="164" height="176.5" fill="none" stroke="#5a5a5a" stroke-width="1"/><rect x="462.5" y="121.1" width="19.0" height="19.2" fill="#fff"/><path d="M463.0 140.1 L481.0 121.6" stroke="#ee1c24" stroke-width="1.5"/><rect x="482.25" y="121.1" width="19.0" height="19.2" fill="#e6e6e6"/><g stroke="#777" stroke-width=".9" fill="none"><circle cx="491.75" cy="130.7" r="5.3"/><circle cx="491.75" cy="130.7" r="2"/><path d="M483.75 130.7 H499.75 M491.75 122.69999999999999 V138.7"/></g><rect x="462.5" y="142.4" width="19.4" height="19.5" fill="#464646"/><path d="M466.5 148.4 h4 l1 1 h6.5 v8 h-11.5z" fill="#bdbdbd"/><rect x="466.5" y="149.9" width="11.5" height="1" fill="#8a8a8a"/><rect x="482.25" y="142.4" width="19.0" height="18.9" fill="#000000"/><rect x="502.0" y="142.4" width="19.0" height="18.9" fill="#b98a55"/><path d="M521.0 161.3 L521.0 154.8 L514.5 161.3Z" fill="#f4f4f4"/><circle cx="519.0" cy="159.4" r="1" fill="#111"/><rect x="521.75" y="142.4" width="19.0" height="18.9" fill="#8d4b78"/><path d="M540.75 161.3 L540.75 154.8 L534.25 161.3Z" fill="#f4f4f4"/><circle cx="538.75" cy="159.4" r="1" fill="#111"/><rect x="541.5" y="142.4" width="19.0" height="18.9" fill="#2f62ad"/><rect x="561.25" y="142.4" width="19.0" height="18.9" fill="#4b2f7f"/><path d="M580.25 161.3 L580.25 154.8 L573.75 161.3Z" fill="#f4f4f4"/><circle cx="578.25" cy="159.4" r="1" fill="#111"/><rect x="581.0" y="142.4" width="19.0" height="18.9" fill="#a37fd0"/><path d="M600.0 161.3 L600.0 154.8 L593.5 161.3Z" fill="#f4f4f4"/><circle cx="598.0" cy="159.4" r="1" fill="#111"/><rect x="462.5" y="162.1" width="19.0" height="19.3" fill="#14afe0"/><rect x="482.25" y="162.1" width="19.0" height="19.3" fill="#138a93"/><path d="M501.25 181.4 L501.25 174.9 L494.75 181.4Z" fill="#f4f4f4"/><circle cx="499.25" cy="179.5" r="1" fill="#111"/><rect x="502.0" y="162.1" width="19.0" height="19.3" fill="#17ad6f"/><rect x="521.75" y="162.1" width="19.0" height="19.3" fill="#fde349"/><path d="M540.75 181.4 L540.75 174.9 L534.25 181.4Z" fill="#f4f4f4"/><circle cx="538.75" cy="179.5" r="1" fill="#111"/><rect x="541.5" y="162.1" width="19.0" height="19.3" fill="#f7711f"/><path d="M560.5 181.4 L560.5 174.9 L554.0 181.4Z" fill="#f4f4f4"/><circle cx="558.5" cy="179.5" r="1" fill="#111"/><rect x="561.25" y="162.1" width="19.0" height="19.3" fill="#ee2428"/><path d="M580.25 181.4 L580.25 174.9 L573.75 181.4Z" fill="#f4f4f4"/><circle cx="578.25" cy="179.5" r="1" fill="#111"/><rect x="581.0" y="162.1" width="19.0" height="19.3" fill="#ee45b4"/><path d="M600.0 181.4 L600.0 174.9 L593.5 181.4Z" fill="#f4f4f4"/><circle cx="598.0" cy="179.5" r="1" fill="#111"/><rect x="462.5" y="182.0" width="19.0" height="19.2" fill="#f77b7c"/><path d="M481.5 201.2 L481.5 194.7 L475.0 201.2Z" fill="#f4f4f4"/><circle cx="479.5" cy="199.29999999999998" r="1" fill="#111"/><rect x="458.2" y="202" width="106" height="21" fill="none" stroke="#fcdc00" stroke-width="3"/><rect x="462.5" y="203.5" width="19.4" height="19.5" fill="#464646"/><path d="M466.5 209.5 h4 l1 1 h6.5 v8 h-11.5z" fill="#bdbdbd"/><rect x="466.5" y="211.0" width="11.5" height="1" fill="#8a8a8a"/><rect x="482.5" y="203.5" width="18.5" height="19" fill="#9a9a9a"/><rect x="483.5" y="204.5" width="16.5" height="17" fill="#000"/><rect x="501.5" y="203.5" width="19.5" height="19" fill="#414141"/><rect x="521" y="203.5" width="20" height="19" fill="#878787"/><rect x="541" y="203.5" width="20" height="19" fill="#c3c3c3"/><rect x="561" y="203.5" width="1.5" height="19" fill="#3a3a3a"/><path d="M471.3 235.5 L491.8 270.8 L478.4 270.8 L478.4 307.2 L464.2 307.2 L464.2 270.8 L450.3 270.8Z" fill="#fcdc00" stroke="#161616" stroke-width="2.2" stroke-linejoin="miter"/><path d="M491 299 L487.5 302.5 L491 306" fill="none" stroke="#c6c6c6" stroke-width="1.3"/><circle cx="489.5" cy="302.5" r="1.3" fill="#c6c6c6"/><path d="M503 305.5 H514 A2.8 2.8 0 0 0 513 300 A3.8 3.8 0 0 0 506 300.5 A2.5 2.5 0 0 0 503 305.5Z" fill="#c6c6c6"/><path d="M500 304 H503" stroke="#c6c6c6" stroke-width="1"/><rect x="525.5" y="298" width="8" height="8" fill="none" stroke="#c6c6c6" stroke-width="1"/><rect x="527" y="299.5" width="2" height="2" fill="#c6c6c6"/><rect x="530" y="302.5" width="2" height="2" fill="#c6c6c6"/><rect x="535" y="305" width="1.3" height="1.3" fill="#c6c6c6"/><rect x="544.5" y="298.5" width="8.5" height="8" fill="none" stroke="#c6c6c6" stroke-width="1"/><rect x="544.5" y="298.5" width="8.5" height="2" fill="#c6c6c6"/><path d="M562.5 299.5 h3.5 l1 1 h5 v6 h-9.5z" fill="#c6c6c6"/><path d="M582 298 H589 V304 L587 306 H582Z" fill="#c6c6c6"/><path d="M599.5 299.5 H607.5 M601 298 H606" stroke="#c6c6c6" stroke-width="1"/><path d="M600.5 300.5 H606.5 L606 306.5 H601Z" fill="none" stroke="#c6c6c6" stroke-width="1"/></svg><svg style="left:0px;top:0px;" width="900" height="562" viewBox="0 0 900 562"><rect x="628" y="64" width="28" height="8" fill="#3a3a3a"/><path d="M647 65.8 L644.3 68 L647 70.2Z M649.6 65.8 L646.9 68 L649.6 70.2Z" fill="#8a8a8a"/><rect x="628" y="72" width="28" height="195" fill="#4a4a4a"/><rect x="628" y="64" width="1" height="203" fill="#2e2e2e"/><rect x="629" y="101" width="27" height="1.2" fill="#383838"/><rect x="629" y="168.5" width="27" height="1.2" fill="#383838"/><rect x="629" y="236" width="27" height="1.2" fill="#383838"/><rect x="629" y="266.5" width="27" height="1" fill="#383838"/><rect x="636" y="76" width="13" height="1" fill="#3a3a3a"/><rect x="636" y="104.6" width="13" height="1" fill="#3a3a3a"/><rect x="636" y="172.8" width="13" height="1" fill="#3a3a3a"/><rect x="636" y="241.2" width="13" height="1" fill="#3a3a3a"/><rect x="632.7" y="80.5" width="18.6" height="15.7" fill="#303030"/><rect x="636" y="84" width="12" height="9" fill="#bdbdbd"/><g fill="#444"><rect x="637.5" y="85.5" width="2.5" height="2.5"/><rect x="641" y="85.5" width="2.5" height="2.5"/><rect x="644.5" y="85.5" width="2.5" height="2.5"/><rect x="637.5" y="89" width="2.5" height="2.5"/><rect x="641" y="89" width="2.5" height="2.5"/></g><g fill="#c6c6c6"><rect x="636" y="112.8" width="13" height="1.2"/><rect x="636" y="116.2" width="13" height="1.8"/><rect x="636" y="119.6" width="13" height="2.2"/></g><defs><linearGradient id="dg" x1="0" y1="0" x2="1" y2="0"><stop offset="0" stop-color="#444"/><stop offset="1" stop-color="#ddd"/></linearGradient></defs><rect x="636.5" y="132.4" width="12" height="8.8" fill="url(#dg)" stroke="#bbb" stroke-width="1"/><circle cx="640.5" cy="155" r="4.5" fill="#aaa"/><circle cx="644" cy="159.5" r="4.5" fill="#777" stroke="#bbb" stroke-width="1"/><path d="M637 191 L640.8 180.5 L644.5 191 M638.3 187.5 H643.3" fill="none" stroke="#c6c6c6" stroke-width="1.5"/><rect x="647" y="180.5" width="1" height="10.5" fill="#c6c6c6"/><path d="M644 200.5 H647.5 M644.5 200.5 V210 M646.5 200.5 V210" stroke="#c6c6c6" stroke-width="1"/><path d="M644.5 200.5 A2.8 2.8 0 0 0 644.5 206 Z" fill="#c6c6c6"/><circle cx="642.5" cy="224.6" r="4.6" fill="#c6c6c6"/><circle cx="642.5" cy="224.6" r="6" fill="none" stroke="#c6c6c6" stroke-width="1" stroke-dasharray="1 1.2"/><rect x="637" y="247.6" width="1" height="12.8" fill="#c6c6c6"/><rect x="639" y="249" width="5" height="4" fill="#c6c6c6"/><rect x="639" y="255" width="9" height="4" fill="#c6c6c6"/></svg><svg style="left:0px;top:0px;" width="900" height="562" viewBox="0 0 900 562"><rect x="656" y="62" width="244" height="500" fill="#484848"/><rect x="656" y="62" width="1" height="494" fill="#2e2e2e"/><rect x="657" y="63" width="243" height="9" fill="#3a3a3a"/><path d="M890 65.8 L892.7 68 L890 70.2Z M892.5 65.8 L895.2 68 L892.5 70.2Z" fill="#8a8a8a"/><rect x="657" y="72" width="243" height="19" fill="#434343"/><rect x="657" y="72" width="35" height="19" fill="#4f4f4f"/><rect x="692" y="72" width="1" height="19" fill="#3c3c3c"/><rect x="740" y="72" width="1" height="19" fill="#3c3c3c"/><rect x="771" y="72" width="1" height="19" fill="#3c3c3c"/><rect x="888" y="79" width="7" height="6.5" fill="#8a8a8a"/><rect x="657" y="91" width="243" height="1" fill="#3a3a3a"/><rect x="660.5" y="94.5" width="235" height="446.5" fill="none" stroke="#555" stroke-width="1"/><rect x="661" y="118.0" width="233" height="1" fill="#424242"/><ellipse cx="667.9000000000001" cy="106.85000000000001" rx="4.1" ry="2.7" fill="#d6d6d6"/><circle cx="667.9000000000001" cy="106.85000000000001" r="1.7" fill="#3a3a3a"/><circle cx="668.3000000000001" cy="106.45" r="0.6" fill="#bbb"/><rect x="691" y="96.2" width="2.5" height="20.8" fill="#4b82e6"/><path d="M700 105.4 L702.5 107.9 L705 105.4" stroke="#bbb" stroke-width="1.1" fill="none"/><rect x="711.5" y="96.5" width="20.5" height="20.5" fill="#fff" stroke="#1a1a1a" stroke-width="1"/><g fill="#222"><rect x="714.5" y="97.5" width="1.2" height="18.5"/><rect x="718.0" y="97.5" width="1" height="18.5"/><rect x="720.0" y="97.5" width="1" height="18.5"/><rect x="722.0" y="97.5" width="1" height="18.5"/><rect x="724.5" y="97.5" width="2" height="18.5"/><rect x="727.5" y="97.5" width="1.3" height="18.5"/><rect x="729.5" y="97.5" width="1" height="18.5"/></g><circle cx="877.5" cy="106.9" r="2.8" fill="none" stroke="#cfcfcf" stroke-width="1.2"/><rect x="884.5" y="104.4" width="5" height="5" fill="#4b82e6" stroke="#222" stroke-width=".8"/><rect x="869.5" y="95.2" width="1" height="23.3" fill="#424242"/><rect x="661" y="141.3" width="233" height="1" fill="#424242"/><ellipse cx="667.9000000000001" cy="130.15" rx="4.1" ry="2.7" fill="#d6d6d6"/><circle cx="667.9000000000001" cy="130.15" r="1.7" fill="#3a3a3a"/><circle cx="668.3000000000001" cy="129.75" r="0.6" fill="#bbb"/><rect x="691" y="119.5" width="2.5" height="20.8" fill="#4b82e6"/><path d="M715.5 127.7 L718 130.2 L715.5 132.7" stroke="#bbb" stroke-width="1.1" fill="none"/><rect x="728.3" y="119.8" width="20.5" height="20.5" fill="#fff" stroke="#1a1a1a" stroke-width="1"/><rect x="737.8" y="120.3" width="1.5" height="19.5" fill="#111"/><circle cx="877.5" cy="130.2" r="3.8" fill="#8a8a8a" stroke="#cfcfcf" stroke-width="1"/><circle cx="877.5" cy="130.2" r="2" fill="none" stroke="#d8d8d8" stroke-width="1"/><rect x="884.2" y="127.2" width="6" height="6" fill="#4b82e6" stroke="#222" stroke-width=".8"/><rect x="869.5" y="118.5" width="1" height="23.3" fill="#424242"/><rect x="661" y="164.6" width="233" height="1" fill="#424242"/><ellipse cx="667.9000000000001" cy="153.45000000000002" rx="4.1" ry="2.7" fill="#d6d6d6"/><circle cx="667.9000000000001" cy="153.45000000000002" r="1.7" fill="#3a3a3a"/><circle cx="668.3000000000001" cy="153.05" r="0.6" fill="#bbb"/><rect x="691" y="142.8" width="2.5" height="20.8" fill="#4b82e6"/><path d="M715.5 151.0 L718 153.5 L715.5 156.0" stroke="#bbb" stroke-width="1.1" fill="none"/><rect x="728.3" y="143.10000000000002" width="20.5" height="20.5" fill="#fff" stroke="#1a1a1a" stroke-width="1"/><rect x="737.8" y="143.60000000000002" width="1.5" height="19.5" fill="#111"/><circle cx="877.5" cy="153.5" r="3.8" fill="#8a8a8a" stroke="#cfcfcf" stroke-width="1"/><circle cx="877.5" cy="153.5" r="2" fill="none" stroke="#d8d8d8" stroke-width="1"/><rect x="884.2" y="150.5" width="6" height="6" fill="#4b82e6" stroke="#222" stroke-width=".8"/><rect x="869.5" y="141.8" width="1" height="23.3" fill="#424242"/><rect x="661" y="187.9" width="233" height="1" fill="#424242"/><ellipse cx="667.9000000000001" cy="176.75000000000003" rx="4.1" ry="2.7" fill="#d6d6d6"/><circle cx="667.9000000000001" cy="176.75000000000003" r="1.7" fill="#3a3a3a"/><circle cx="668.3000000000001" cy="176.35000000000002" r="0.6" fill="#bbb"/><rect x="691" y="166.1" width="2.5" height="20.8" fill="#4b82e6"/><path d="M715.5 174.3 L718 176.8 L715.5 179.3" stroke="#bbb" stroke-width="1.1" fill="none"/><rect x="728.3" y="166.40000000000003" width="20.5" height="20.5" fill="#fff" stroke="#1a1a1a" stroke-width="1"/><rect x="737.8" y="166.90000000000003" width="1.5" height="19.5" fill="#111"/><circle cx="877.5" cy="176.8" r="3.8" fill="#8a8a8a" stroke="#cfcfcf" stroke-width="1"/><circle cx="877.5" cy="176.8" r="2" fill="none" stroke="#d8d8d8" stroke-width="1"/><rect x="884.2" y="173.8" width="6" height="6" fill="#4b82e6" stroke="#222" stroke-width=".8"/><rect x="869.5" y="165.1" width="1" height="23.3" fill="#424242"/><rect x="661" y="211.2" width="233" height="1" fill="#424242"/><ellipse cx="667.9000000000001" cy="200.05" rx="4.1" ry="2.7" fill="#d6d6d6"/><circle cx="667.9000000000001" cy="200.05" r="1.7" fill="#3a3a3a"/><circle cx="668.3000000000001" cy="199.65" r="0.6" fill="#bbb"/><rect x="691" y="189.4" width="2.5" height="20.8" fill="#4b82e6"/><path d="M715.5 197.6 L718 200.1 L715.5 202.6" stroke="#bbb" stroke-width="1.1" fill="none"/><rect x="728.3" y="189.70000000000002" width="20.5" height="20.5" fill="#fff" stroke="#1a1a1a" stroke-width="1"/><rect x="737.8" y="190.20000000000002" width="1.5" height="19.5" fill="#111"/><circle cx="877.5" cy="200.1" r="3.8" fill="#8a8a8a" stroke="#cfcfcf" stroke-width="1"/><circle cx="877.5" cy="200.1" r="2" fill="none" stroke="#d8d8d8" stroke-width="1"/><rect x="884.2" y="197.1" width="6" height="6" fill="#4b82e6" stroke="#222" stroke-width=".8"/><rect x="869.5" y="188.4" width="1" height="23.3" fill="#424242"/><rect x="661" y="211.7" width="234" height="23.3" fill="#405a77"/><rect x="661" y="234.5" width="233" height="1" fill="#424242"/><ellipse cx="667.9000000000001" cy="223.35" rx="4.1" ry="2.7" fill="#d6d6d6"/><circle cx="667.9000000000001" cy="223.35" r="1.7" fill="#3a3a3a"/><circle cx="668.3000000000001" cy="222.95" r="0.6" fill="#bbb"/><rect x="691" y="212.7" width="2.5" height="20.8" fill="#4b82e6"/><rect x="728.3" y="213.0" width="20.5" height="20.5" fill="#fff" stroke="#1a1a1a" stroke-width="1"/><rect x="737.8" y="213.5" width="1.5" height="19.5" fill="#111"/><circle cx="877.5" cy="223.3" r="3.8" fill="#8a8a8a" stroke="#cfcfcf" stroke-width="1"/><circle cx="877.5" cy="223.3" r="2" fill="none" stroke="#d8d8d8" stroke-width="1"/><rect x="884.2" y="220.3" width="6" height="6" fill="#4b82e6" stroke="#222" stroke-width=".8"/><rect x="869.5" y="211.7" width="1" height="23.3" fill="#424242"/><rect x="661" y="257.8" width="233" height="1" fill="#424242"/><ellipse cx="667.9000000000001" cy="246.65" rx="4.1" ry="2.7" fill="#d6d6d6"/><circle cx="667.9000000000001" cy="246.65" r="1.7" fill="#3a3a3a"/><circle cx="668.3000000000001" cy="246.25" r="0.6" fill="#bbb"/><rect x="691" y="236.0" width="2.5" height="20.8" fill="#4b82e6"/><path d="M715.5 244.2 L718 246.7 L715.5 249.2" stroke="#bbb" stroke-width="1.1" fill="none"/><rect x="728.3" y="236.3" width="20.5" height="20.5" fill="#fff" stroke="#1a1a1a" stroke-width="1"/><text x="728.8" y="249.3" font-family="Liberation Sans" font-weight="bold" font-size="8" fill="#111">/ 100</text><circle cx="877.5" cy="246.7" r="3.2" fill="none" stroke="#cfcfcf" stroke-width="1.1"/><rect x="869.5" y="235.0" width="1" height="23.3" fill="#424242"/><rect x="661" y="281.1" width="233" height="1" fill="#424242"/><ellipse cx="667.9000000000001" cy="269.95" rx="4.1" ry="2.7" fill="#d6d6d6"/><circle cx="667.9000000000001" cy="269.95" r="1.7" fill="#3a3a3a"/><circle cx="668.3000000000001" cy="269.55" r="0.6" fill="#bbb"/><rect x="691" y="259.3" width="2.5" height="20.8" fill="#4b82e6"/><path d="M715.5 267.4 L718 269.9 L715.5 272.4" stroke="#bbb" stroke-width="1.1" fill="none"/><rect x="728.3" y="259.6" width="20.5" height="20.5" fill="#fff" stroke="#1a1a1a" stroke-width="1"/><rect x="729.8" y="267.1" width="18" height="5" fill="#111"/><rect x="732.3" y="269.1" width="13" height="1" fill="#ccc"/><circle cx="877.5" cy="269.9" r="3.2" fill="none" stroke="#cfcfcf" stroke-width="1.1"/><rect x="869.5" y="258.3" width="1" height="23.3" fill="#424242"/><path d="M890 96 L895 96 L895 101Z" fill="#ddd"/><rect x="657" y="555" width="243" height="7" fill="#2f2f2f"/><circle cx="804.5" cy="547.5" r="2.8" fill="none" stroke="#c6c6c6" stroke-width="1.3"/><path d="M802.5 549.5 L799.5 552.5" stroke="#c6c6c6" stroke-width="1.6"/><rect x="816.7" y="545.5" width="6" height="6.5" fill="none" stroke="#777" stroke-width="1"/><g fill="#777"><rect x="833.5" y="547" width="3" height="4"/><rect x="837.5" y="546" width="3" height="6"/><rect x="841" y="546" width="3" height="6"/></g><path d="M854 545.5 H861.5 V552.5 H856 L854 550.5Z" fill="#c6c6c6"/><path d="M872 546 H880 M874 544.5 H878" stroke="#c6c6c6" stroke-width="1"/><path d="M873 547 H879 L878.5 553 H873.5Z" fill="none" stroke="#c6c6c6" stroke-width="1"/></svg><div class="t" style="left:663.7px;top:78.05px;font-size:8.8px;color:#f0f0f0;font-weight:bold;transform:scaleX(0.8141);">Layers</div><div class="t" style="left:698.4px;top:78.05px;font-size:8.8px;color:#b8b8b8;font-weight:bold;transform:scaleX(0.8586);">Artboards</div><div class="t" style="left:746.8px;top:78.05px;font-size:8.8px;color:#b8b8b8;font-weight:bold;transform:scaleX(0.8179);">Links</div><div class="t" style="left:736.5px;top:103.43px;font-size:9px;color:#e4e4e4;font-weight:normal;transform:scaleX(0.8025);">Layer 1</div><div class="t" style="left:753.3px;top:126.73px;font-size:9px;color:#e4e4e4;font-weight:normal;transform:scaleX(0.8725);">&lt;Group&gt;</div><div class="t" style="left:753.3px;top:150.03px;font-size:9px;color:#e4e4e4;font-weight:normal;transform:scaleX(0.8725);">&lt;Group&gt;</div><div class="t" style="left:753.3px;top:173.33px;font-size:9px;color:#e4e4e4;font-weight:normal;transform:scaleX(0.8725);">&lt;Group&gt;</div><div class="t" style="left:753.3px;top:196.63px;font-size:9px;color:#e4e4e4;font-weight:normal;transform:scaleX(0.8725);">&lt;Group&gt;</div><div class="t" style="left:753.3px;top:219.93px;font-size:9px;color:#e4e4e4;font-weight:normal;transform:scaleX(0.8470);">&lt;Compound Path&gt;</div><div class="t" style="left:753.3px;top:243.23px;font-size:9px;color:#e4e4e4;font-weight:normal;transform:scaleX(0.8725);">&lt;Group&gt;</div><div class="t" style="left:753.3px;top:266.53px;font-size:9px;color:#e4e4e4;font-weight:normal;transform:scaleX(0.8725);">&lt;Group&gt;</div><div class="t" style="left:660.6px;top:545.10px;font-size:8.5px;color:#e0e0e0;font-weight:normal;transform:scaleX(0.8463);">1 Layer</div><div class="t" style="left:465.3px;top:78.02px;font-size:8.6px;color:#ececec;font-weight:bold;transform:scaleX(0.8322);">Swatches</div><svg style="left:0px;top:0px;" width="900" height="562" viewBox="0 0 900 562"><rect x="0" y="551" width="656" height="11" fill="#3f3f3f"/><rect x="3" y="551" width="35" height="11" fill="#353535"/><rect x="38" y="551" width="10" height="11" fill="#404040"/><path d="M41 555.5 L43 557.5 L45 555.5" stroke="#ccc" stroke-width="1" fill="none"/><path d="M56 553.5 V559.5 M61 553.5 L58 556.5 L61 559.5 M72 553.5 L69 556.5 L72 559.5" stroke="#5c5c5c" stroke-width="1" fill="none"/><rect x="78" y="551" width="30" height="11" fill="#353535"/><rect x="110" y="551" width="10" height="11" fill="#404040"/><path d="M112.7 555.5 L114.7 557.5 L116.7 555.5" stroke="#ccc" stroke-width="1" fill="none"/><path d="M128.5 553.5 L131.5 556.5 L128.5 559.5 M138 553.5 L141 556.5 L138 559.5 M142.5 553.5 V559.5" stroke="#5c5c5c" stroke-width="1" fill="none"/><path d="M296 553.8 L299 556.5 L296 559.2Z" fill="#ddd"/><path d="M311.5 553.5 L309 556.5 L311.5 559.5" stroke="#777" stroke-width="1" fill="none"/><rect x="606" y="553" width="20" height="9" rx="4" fill="#545454"/><g fill="#1e1e1e"><rect x="-4.0" y="560.6" width="8" height="1.4"/><rect x="13.1" y="560.6" width="8" height="1.4"/><rect x="30.2" y="560.6" width="8" height="1.4"/><rect x="47.3" y="560.6" width="8" height="1.4"/><rect x="64.4" y="560.6" width="8" height="1.4"/><rect x="81.5" y="560.6" width="8" height="1.4"/><rect x="98.6" y="560.6" width="8" height="1.4"/><rect x="115.7" y="560.6" width="8" height="1.4"/><rect x="132.8" y="560.6" width="8" height="1.4"/><rect x="149.9" y="560.6" width="8" height="1.4"/><rect x="167.0" y="560.6" width="8" height="1.4"/><rect x="184.1" y="560.6" width="8" height="1.4"/><rect x="201.2" y="560.6" width="8" height="1.4"/><rect x="218.3" y="560.6" width="8" height="1.4"/><rect x="235.4" y="560.6" width="8" height="1.4"/><rect x="252.5" y="560.6" width="8" height="1.4"/><rect x="269.6" y="560.6" width="8" height="1.4"/><rect x="286.7" y="560.6" width="8" height="1.4"/><rect x="303.8" y="560.6" width="8" height="1.4"/><rect x="320.9" y="560.6" width="8" height="1.4"/><rect x="338.0" y="560.6" width="8" height="1.4"/><rect x="355.1" y="560.6" width="8" height="1.4"/><rect x="372.2" y="560.6" width="8" height="1.4"/><rect x="389.3" y="560.6" width="8" height="1.4"/><rect x="406.4" y="560.6" width="8" height="1.4"/><rect x="423.5" y="560.6" width="8" height="1.4"/><rect x="440.6" y="560.6" width="8" height="1.4"/><rect x="457.7" y="560.6" width="8" height="1.4"/><rect x="474.8" y="560.6" width="8" height="1.4"/><rect x="491.9" y="560.6" width="8" height="1.4"/><rect x="509.0" y="560.6" width="8" height="1.4"/><rect x="526.1" y="560.6" width="8" height="1.4"/><rect x="543.2" y="560.6" width="8" height="1.4"/><rect x="560.3" y="560.6" width="8" height="1.4"/><rect x="577.4" y="560.6" width="8" height="1.4"/><rect x="594.5" y="560.6" width="8" height="1.4"/><rect x="611.6" y="560.6" width="8" height="1.4"/><rect x="628.7" y="560.6" width="8" height="1.4"/><rect x="645.8" y="560.6" width="8" height="1.4"/><rect x="662.9" y="560.6" width="8" height="1.4"/><rect x="680.0" y="560.6" width="8" height="1.4"/><rect x="697.1" y="560.6" width="8" height="1.4"/><rect x="714.2" y="560.6" width="8" height="1.4"/><rect x="731.3" y="560.6" width="8" height="1.4"/><rect x="748.4" y="560.6" width="8" height="1.4"/><rect x="765.5" y="560.6" width="8" height="1.4"/><rect x="782.6" y="560.6" width="8" height="1.4"/><rect x="799.7" y="560.6" width="8" height="1.4"/><rect x="816.8" y="560.6" width="8" height="1.4"/><rect x="833.9" y="560.6" width="8" height="1.4"/><rect x="851.0" y="560.6" width="8" height="1.4"/><rect x="868.1" y="560.6" width="8" height="1.4"/><rect x="885.2" y="560.6" width="8" height="1.4"/></g></svg><div class="t" style="left:5.5px;top:553.30px;font-size:8.5px;color:#d0d0d0;font-weight:normal;transform:scaleX(0.8228);">50%</div><div class="t" style="left:82px;top:553.30px;font-size:8.5px;color:#d0d0d0;font-weight:normal;transform:scaleX(0.7393);">1</div><div class="t" style="left:182px;top:553.30px;font-size:8.5px;color:#d0d0d0;font-weight:normal;transform:scaleX(0.9029);">Toggle Direct Selection</div></body></html>
